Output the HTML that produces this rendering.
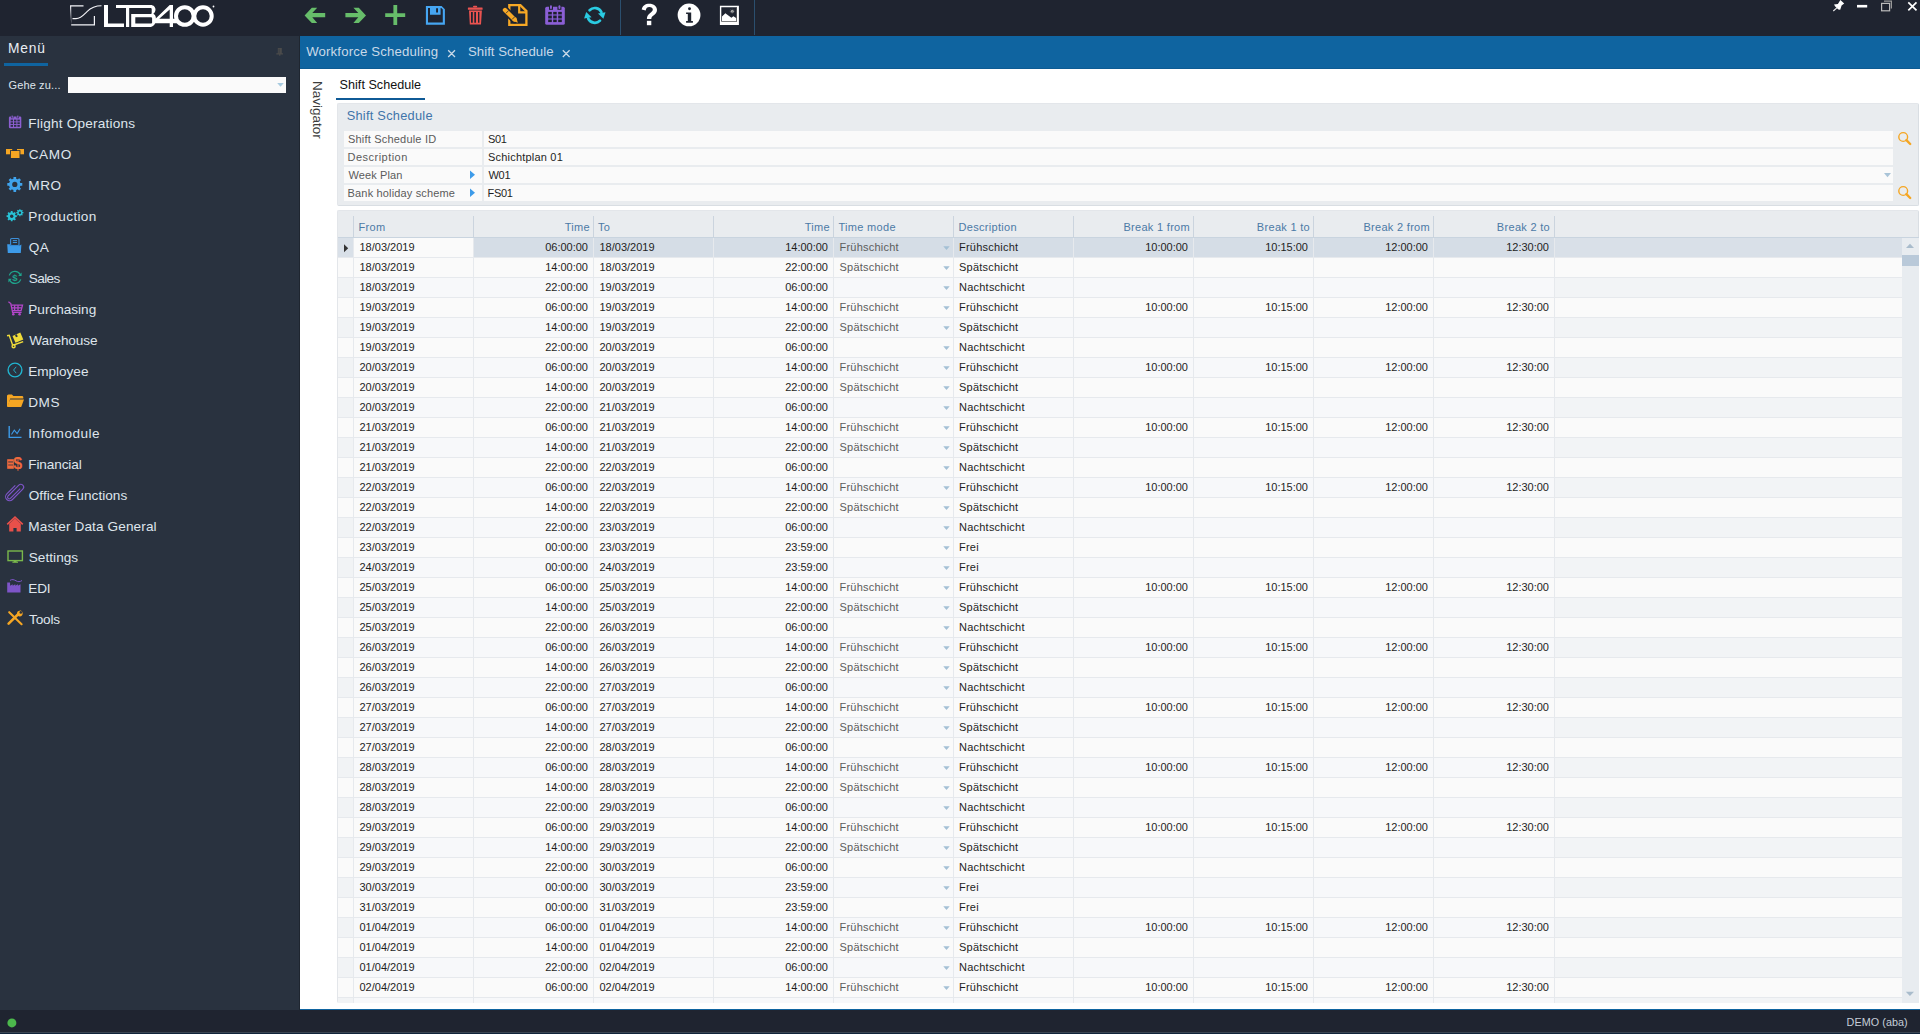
<!DOCTYPE html><html><head><meta charset="utf-8"><style>
*{box-sizing:border-box;margin:0;padding:0}
html,body{width:1920px;height:1034px;overflow:hidden;background:#1f2430;font-family:"Liberation Sans",sans-serif}
.abs{position:absolute}
#top{position:absolute;left:0;top:0;width:1920px;height:36px;background:#1f2430}
#side{position:absolute;left:0;top:36px;width:300px;height:974px;background:#29323f;border-right:1px solid #1f2630}
#status{position:absolute;left:0;top:1010px;width:1920px;height:24px;background:#1f2430}
#tabbar{position:absolute;left:300px;top:36px;width:1620px;height:33px;background:#0f64a0;border-bottom:1px solid #0d5b93}
#content{position:absolute;left:300px;top:69px;width:1620px;height:940px;background:#fff}
.t{position:absolute;white-space:pre;line-height:1}
.mi{position:absolute;left:29px;font-size:13.8px;color:#dfe5ec}
.panel{position:absolute;background:#e9ecef;border-radius:2px;border:1px solid #e3e6ea;border-right-color:#d9dee3;border-bottom-color:#d9dee3}
.lab{position:absolute;left:344px;width:138px;height:16px;background:#fafafa}
.val{position:absolute;left:484px;width:1409px;height:16px;background:#fafafa}
.lt{position:absolute;font-size:11.3px;color:#5a5a5a;white-space:pre;line-height:1}
.vt{position:absolute;font-size:11px;color:#1e1e1e;white-space:pre;line-height:1}
.hd{position:absolute;font-size:11px;color:#4c7aa6;white-space:pre;line-height:1}
.hsep{position:absolute;top:216px;width:1px;height:21px;background:#cbd4de}
.row{position:absolute;left:337px;width:1565px;height:20px}
.c{position:absolute;top:0;height:19px;font-size:11px;color:#1e1e1e;white-space:pre;line-height:19px}
.r{text-align:right}
</style></head><body><div id="top"></div><div id="side"></div><div id="status"></div><div id="tabbar"></div><div id="content"></div><div class="abs" style="left:300px;top:1009px;width:1620px;height:1px;background:#0f64a0;"></div><div class="abs" style="left:0px;top:1032px;width:1920px;height:1px;background:#3a4451;"></div><div class="abs" style="left:0px;top:1033px;width:1920px;height:1px;background:#10243a;"></div><div class="abs" style="left:620px;top:0px;width:1px;height:35px;background:#2b4f6e;"></div><div class="abs" style="left:754px;top:0px;width:1px;height:35px;background:#2b4f6e;"></div><svg class="abs" style="left:0;top:0" width="1920" height="36" viewBox="0 0 1920 36">
<g fill="#fff">
<!-- logo box -->
<path d="M70 5.2h13.5v1.2H71.2v19H95V16h-1.2v8.2H71.2z" fill="#f4f4f8"/>
<path d="M72.5 18.6h3.5c4.5 0 7.5-3.5 11-7 3.5-3.5 7-5.8 14.5-5.8" fill="none" stroke="#f4f4f8" stroke-width="1.1"/>
<!-- L -->
<path d="M104 5h4v18.6h16V27h-20z"/>
<!-- T + B -->
<path d="M116 5h34.5c3.4 0 5 2.3 5 4.6 0 1.8-.9 3.3-2.2 4.1 1.6.7 2.6 2.3 2.6 4.4v1.8c0 3.6-2.4 7.1-6.5 7.1H131.2V14h19.3c.7 0 1.2-.5 1.2-1.1v-3.7c0-.6-.5-1.1-1.2-1.1H129.2v19h-3.2V8.1h-10z"/>
<path d="M135.3 17.3h15.5c.8 0 1.3.5 1.3 1.2v3.9c0 .6-.5 1.2-1.3 1.2h-15.5z" fill="#1f2430"/>
<!-- 4 -->
<path d="M169.7 5h3.3v13.8h4.5v4.4h-4.5V27h-3.3v-3.8h-15v-3.6zM169.7 9.6l-10.5 9.2h10.5z" fill-rule="evenodd"/>
<!-- 0 0 -->
<circle cx="184.8" cy="16" r="8.8" fill="none" stroke="#fff" stroke-width="4"/>
<circle cx="203" cy="16" r="8.7" fill="none" stroke="#fff" stroke-width="4"/>
<circle cx="213.5" cy="6.5" r=".9"/>
</g>
<!-- left arrow -->
<path d="M304.6 15.5L311.8 7.8h5.4l-4.9 5.1h12.9v4.3h-12.9l4.9 5.7h-5.4z" fill="#67bd6a"/>
<path d="M304.6 15.5L311.8 7.8h5.4l-4.9 5.1h12.9v4.3h-12.9l4.9 5.7h-5.4z" fill="#67bd6a" transform="translate(670.6 0) scale(-1 1)"/>
<!-- plus -->
<path d="M393.4 5h3.8v8.3h8v3.8h-8V25h-3.8v-7.9h-8.2v-3.8h8.2z" fill="#67bd6a"/>
<!-- save -->
<path d="M425.9 6h15.7l3.3 3.3v15.5h-19zM428 8v14.5h14.8V9.6L441.3 8H440.6v6.8H430V8zM436.1 8.2v4.4h1.9V8.2z" fill="#46a6f2" fill-rule="evenodd"/>
<!-- trash -->
<g fill="#ea5350">
<rect x="473" y="5.8" width="4.2" height="1.6" rx=".8"/>
<rect x="467.9" y="7.6" width="14.7" height="2.1" rx=".5"/>
<path d="M469 10.5h12.9l-.9 14h-11.2zM471 12v10.7h1.8V12zM474.3 12v10.7h1.7V12zM478 12v10.7h1.4V12z" fill-rule="evenodd"/>
</g>
<!-- edit doc -->
<g>
<path d="M509.3 5.2h11.1l6 5.9v13.8h-17.1z" fill="none" stroke="#f7a825" stroke-width="2.3"/>
<path d="M519.2 5v7.4h7.5" fill="none" stroke="#f7a825" stroke-width="2.2"/>
<line x1="505" y1="10" x2="514.5" y2="19.5" stroke="#1f2430" stroke-width="7.5" stroke-linecap="round"/>
<line x1="505" y1="10" x2="514.5" y2="19.5" stroke="#f7a825" stroke-width="4.4" stroke-linecap="round"/>
<path d="M512.3 20.8l3.7-3.7 1.9 5.6z" fill="#f7a825"/>
<line x1="505.9" y1="13.3" x2="508.7" y2="10.5" stroke="#1f2430" stroke-width=".8"/>
<line x1="512.1" y1="19.4" x2="514.9" y2="16.6" stroke="#1f2430" stroke-width=".8"/>
</g>
<!-- calendar -->
<g>
<rect x="545.2" y="6.7" width="19.6" height="18.1" rx="1.6" fill="#8b5fd6"/>
<rect x="549" y="5" width="4" height="4.8" fill="#1f2430"/>
<rect x="557.4" y="5" width="4" height="4.8" fill="#1f2430"/>
<rect x="550" y="5.3" width="1.9" height="3.6" rx=".9" fill="#8b5fd6"/>
<rect x="558.5" y="5.3" width="1.9" height="3.6" rx=".9" fill="#8b5fd6"/>
<g fill="#1c1f2a">
<rect x="548.2" y="11.9" width="3.6" height="2.4"/><rect x="553.2" y="11.9" width="3.5" height="2.4"/><rect x="558.2" y="11.9" width="3.6" height="2.4"/>
<rect x="548.2" y="16" width="3.6" height="2.1"/><rect x="553.2" y="16" width="3.5" height="2.1"/><rect x="558.2" y="16" width="3.6" height="2.1"/>
<rect x="548.2" y="20" width="3.6" height="2.1"/><rect x="553.2" y="20" width="3.5" height="2.1"/><rect x="558.2" y="20" width="3.6" height="2.1"/>
</g>
<g fill="#55438a">
<rect x="548.2" y="14.3" width="3.6" height="1.7"/><rect x="553.2" y="14.3" width="3.5" height="1.7"/><rect x="558.2" y="14.3" width="3.6" height="1.7"/>
<rect x="548.2" y="18.1" width="3.6" height="1.9"/><rect x="553.2" y="18.1" width="3.5" height="1.9"/><rect x="558.2" y="18.1" width="3.6" height="1.9"/>
</g>
</g>
<!-- refresh -->
<g fill="#2acbe2">
<path d="M589.6 10.2A7.3 7.3 0 0 1 601.4 12.2" fill="none" stroke="#2acbe2" stroke-width="2.7" stroke-linecap="round"/>
<path d="M605.5 12.2L603.4 18.8L598 13.6z"/>
<g transform="rotate(180 594.8 15.4)">
<path d="M589.6 10.2A7.3 7.3 0 0 1 601.4 12.2" fill="none" stroke="#2acbe2" stroke-width="2.7" stroke-linecap="round"/>
<path d="M605.5 12.2L603.4 18.8L598 13.6z"/>
</g>
</g>
<!-- help -->
<path d="M641.7 9.6C642.3 5.6 645.4 3.7 649.3 3.7C653.8 3.7 657 6.3 657 9.9C657 12.6 655.2 14 653.5 15.4C652 16.6 651.3 17.3 651.3 18.9H646.9C646.9 16.2 647.8 14.9 649.9 13.2C651.7 11.8 652.8 11.1 652.8 9.6C652.8 8 651.5 7.1 649.3 7.1C647.3 7.1 646.1 8.2 645.7 10.5Z" fill="#fff"/>
<rect x="646.9" y="20.8" width="4.4" height="4.4" fill="#fff"/>
<!-- info -->
<circle cx="689.05" cy="14.95" r="11.4" fill="#fff"/>
<circle cx="689.5" cy="8.75" r="1.45" fill="#1f2430"/>
<path d="M686.1 12.4h5.1v8.6h1.7v1.8h-6.8V21h1.7v-6.9h-1.7z" fill="#1f2430"/>
<!-- image -->
<path d="M719.9 5.8h19v19.1h-19zM721.3 7.15v14.45h15.7V7.15z" fill="#fff" fill-rule="evenodd"/>
<path d="M722 16.6L725.4 13.3L727 14.5L731.4 17.8L733.4 16.3L736.5 18.3V21H722z" fill="#fff"/>
<rect x="721.3" y="21" width="15.7" height=".7" fill="#777"/>
<rect x="736.3" y="7.2" width=".7" height="14.4" fill="#666"/>
<circle cx="732.2" cy="11.2" r="1.3" fill="#fff"/>
<path d="M732.2 8.6v5.2M729.6 11.2h5.2M730.4 9.4l3.6 3.6M734 9.4l-3.6 3.6" stroke="#777" stroke-width=".5"/>
<!-- window controls -->
<path d="M1840.4 0L1844.2 3.6L1841.6 5.4L1840.2 9.8L1838.4 9.6L1836.8 7.9L1835.2 6.4L1834 4.5L1837.9 3.9L1839.6 1.2z" fill="#fff"/><path d="M1837.4 7.4L1833.3 11" stroke="#eee" stroke-width="1.1"/>
<rect x="1857" y="4.9" width="10.2" height="2.6" fill="#fff"/>
<path d="M1884 1.2h7.4v7.4" fill="none" stroke="#999" stroke-width="1.2"/>
<rect x="1881.6" y="3.4" width="8" height="7.4" fill="none" stroke="#bbb" stroke-width="1.2"/>
<path d="M1908.3 2.3l8.2 8M1916.5 2.3l-8.2 8" stroke="#fff" stroke-width="1.7"/>
</svg><div class="t" style="left:8.07px;top:42.32px;font-size:13.8px;color:#e9eef3;letter-spacing:0.762px;">Menü</div><div class="abs" style="left:4px;top:63px;width:44px;height:3px;background:#0f64a0;"></div><div class="t" style="left:8.45px;top:79.69px;font-size:11px;color:#dfe5eb;letter-spacing:0.144px;">Gehe zu...</div><div class="abs" style="left:68px;top:77px;width:218px;height:16px;background:#fafafa;"></div><div class="t" style="left:28.28px;top:117.49px;font-size:13.6px;color:#dfe5ec;letter-spacing:0.203px">Flight Operations</div><div class="t" style="left:28.71px;top:148.49px;font-size:13.6px;color:#dfe5ec;letter-spacing:0.600px">CAMO</div><div class="t" style="left:28.28px;top:179.49px;font-size:13.6px;color:#dfe5ec;letter-spacing:0.600px">MRO</div><div class="t" style="left:28.28px;top:210.49px;font-size:13.6px;color:#dfe5ec;letter-spacing:0.342px">Production</div><div class="t" style="left:28.76px;top:241.49px;font-size:13.6px;color:#dfe5ec;letter-spacing:0.314px">QA</div><div class="t" style="left:28.77px;top:272.49px;font-size:13.6px;color:#dfe5ec;letter-spacing:-0.600px">Sales</div><div class="t" style="left:28.28px;top:303.49px;font-size:13.6px;color:#dfe5ec;letter-spacing:-0.006px">Purchasing</div><div class="t" style="left:29.33px;top:334.49px;font-size:13.6px;color:#dfe5ec;letter-spacing:-0.098px">Warehouse</div><div class="t" style="left:28.28px;top:365.49px;font-size:13.6px;color:#dfe5ec;letter-spacing:-0.038px">Employee</div><div class="t" style="left:28.28px;top:396.49px;font-size:13.6px;color:#dfe5ec;letter-spacing:0.511px">DMS</div><div class="t" style="left:28.15px;top:427.49px;font-size:13.6px;color:#dfe5ec;letter-spacing:0.451px">Infomodule</div><div class="t" style="left:28.28px;top:458.49px;font-size:13.6px;color:#dfe5ec;letter-spacing:-0.125px">Financial</div><div class="t" style="left:28.76px;top:489.49px;font-size:13.6px;color:#dfe5ec;letter-spacing:0.034px">Office Functions</div><div class="t" style="left:28.28px;top:520.49px;font-size:13.6px;color:#dfe5ec;letter-spacing:0.122px">Master Data General</div><div class="t" style="left:28.77px;top:551.49px;font-size:13.6px;color:#dfe5ec;letter-spacing:0.040px">Settings</div><div class="t" style="left:28.28px;top:582.49px;font-size:13.6px;color:#dfe5ec;letter-spacing:-0.152px">EDI</div><div class="t" style="left:29.1px;top:613.49px;font-size:13.6px;color:#dfe5ec;letter-spacing:-0.188px">Tools</div><svg class="abs" style="left:0;top:0" width="300" height="640" viewBox="0 0 300 640">
<!-- menu pin -->
<path d="M277.8 48.1h4v5.2h1.2v1.1h-2.6v1.3h-1.2v-1.3h-2.9v-1.1h1.5z" fill="#4b4b4b"/>
<rect x="278.6" y="48.8" width="1" height="4.5" fill="#29323f" opacity=".5"/>
<path d="M277.2 83h6.6l-3.3 3.8z" fill="#a8cbe0"/>
<!-- flight ops calendar -->
<rect x="8.9" y="116.5" width="12.4" height="11.8" rx="1.2" fill="#8c5fd0"/>
<rect x="11" y="115.6" width="2.4" height="2.6" fill="#29323f"/><rect x="16.6" y="115.6" width="2.4" height="2.6" fill="#29323f"/>
<rect x="11.6" y="115.6" width="1.2" height="2.2" fill="#8c5fd0"/><rect x="17.2" y="115.6" width="1.2" height="2.2" fill="#8c5fd0"/>
<g fill="#2a2f44"><rect x="10.6" y="119.6" width="2.4" height="1.8"/><rect x="14" y="119.6" width="2.4" height="1.8"/><rect x="17.4" y="119.6" width="2.4" height="1.8"/>
<rect x="10.6" y="122.3" width="2.4" height="1.8"/><rect x="14" y="122.3" width="2.4" height="1.8"/><rect x="17.4" y="122.3" width="2.4" height="1.8"/>
<rect x="10.6" y="125" width="2.4" height="1.8"/><rect x="14" y="125" width="2.4" height="1.8"/><rect x="17.4" y="125" width="2.4" height="1.8"/></g>
<!-- CAMO -->
<rect x="6" y="149" width="6.2" height="5.3" fill="#f5a623"/>
<rect x="17" y="149" width="7" height="5.3" fill="#f5a623"/>
<rect x="10" y="150.2" width="10.4" height="8.6" fill="#29323f"/>
<rect x="10.9" y="151" width="8.6" height="7" fill="#f5a623"/>
<!-- MRO gear -->
<polygon points="20.21,182.96 22.29,183.09 22.29,185.71 20.21,185.84 19.64,187.21 21.02,188.77 19.17,190.62 17.61,189.24 16.24,189.81 16.11,191.89 13.49,191.89 13.36,189.81 11.99,189.24 10.43,190.62 8.58,188.77 9.96,187.21 9.39,185.84 7.31,185.71 7.31,183.09 9.39,182.96 9.96,181.59 8.58,180.03 10.43,178.18 11.99,179.56 13.36,178.99 13.49,176.91 16.11,176.91 16.24,178.99 17.61,179.56 19.17,178.18 21.02,180.03 19.64,181.59" fill="#3fa3ec"/><circle cx="14.8" cy="184.4" r="5.6" fill="#3fa3ec"/><circle cx="14.8" cy="184.4" r="2.6" fill="#29323f"/>
<!-- Production gears -->
<polygon points="15.28,215.25 16.82,215.31 16.82,217.09 15.28,217.15 14.90,218.06 15.95,219.19 14.69,220.45 13.56,219.40 12.65,219.78 12.59,221.32 10.81,221.32 10.75,219.78 9.84,219.40 8.71,220.45 7.45,219.19 8.50,218.06 8.12,217.15 6.58,217.09 6.58,215.31 8.12,215.25 8.50,214.34 7.45,213.21 8.71,211.95 9.84,213.00 10.75,212.62 10.81,211.08 12.59,211.08 12.65,212.62 13.56,213.00 14.69,211.95 15.95,213.21 14.90,214.34" fill="#28c2d6"/><circle cx="11.7" cy="216.2" r="3.7" fill="#28c2d6"/><circle cx="11.7" cy="216.2" r="1.7" fill="#29323f"/>
<polygon points="22.32,212.06 23.45,212.08 23.45,213.32 22.32,213.34 22.06,213.96 22.85,214.77 21.97,215.65 21.16,214.86 20.54,215.12 20.52,216.25 19.28,216.25 19.26,215.12 18.64,214.86 17.83,215.65 16.95,214.77 17.74,213.96 17.48,213.34 16.35,213.32 16.35,212.08 17.48,212.06 17.74,211.44 16.95,210.63 17.83,209.75 18.64,210.54 19.26,210.28 19.28,209.15 20.52,209.15 20.54,210.28 21.16,210.54 21.97,209.75 22.85,210.63 22.06,211.44" fill="#28c2d6"/><circle cx="19.9" cy="212.7" r="2.5" fill="#28c2d6"/><circle cx="19.9" cy="212.7" r="1.2" fill="#29323f"/>
<!-- QA folder -->
<rect x="10.6" y="238.5" width="8.4" height="7" rx="1" fill="none" stroke="#3d8fd8" stroke-width="1.1"/>
<rect x="12.8" y="240.2" width="4.2" height=".9" fill="#3d9be9"/><rect x="12.8" y="242" width="4.2" height=".9" fill="#3d9be9"/>
<path d="M7.2 244.2h2.6l.6 1.4h9.4l1.6-1.2-.6 8.6H7.8z" fill="#3d9be9"/>
<path d="M9.6 245.6h10.6" stroke="#2f7fc4" stroke-width=".6"/>
<!-- Sales -->
<g fill="none" stroke="#1fa48c" stroke-width="1.3">
<path d="M9.3 275.4A6 6 0 0 1 20.3 274.6"/><path d="M20.7 279.4A6 6 0 0 1 9.7 280.2"/>
</g>
<path d="M21.6 272.4v3.6h-3.4zM8.4 282.4v-3.6h3.4z" fill="#1fa48c"/>
<text x="12.2" y="281.4" font-family="Liberation Sans" font-size="9.5" font-weight="bold" fill="#1fa48c">$</text>
<!-- Purchasing cart -->
<g fill="none" stroke="#b346c9" stroke-width="1.3">
<path d="M8.4 301.8l2.4 1.8 1.8 8.7h9"/>
<path d="M11.2 305.2h11.3l-1.4 5.4H12.3"/>
<path d="M14.6 305.2v5.4M18 305.2v5.4M11.8 307.9h10"/>
</g>
<circle cx="13.3" cy="314.2" r="1.3" fill="#b346c9"/><circle cx="19.6" cy="314.2" r="1.3" fill="#b346c9"/>
<!-- Warehouse dolly -->
<g fill="none" stroke="#f0dc3a" stroke-width="1.4">
<path d="M7 335.7l2.2-.4 3.4 9.8"/><path d="M13.6 345l9.6-3.4"/>
<circle cx="13.6" cy="346.3" r="1.5"/>
</g>
<path d="M12.5 336l7.8-3.4 3 6.8-7.8 3.4z" fill="#f0dc3a"/>
<path d="M15 335l1.8-.8 1 2.2-1.8.8z" fill="#29323f"/>
<!-- Employee clock -->
<circle cx="15" cy="370" r="6.9" fill="none" stroke="#22b5d0" stroke-width="1.4"/>
<path d="M16.2 366.8l-2.6 3.2 2.6 3.2" fill="none" stroke="#22b5d0" stroke-width=".9"/>
<!-- DMS folder -->
<path d="M7 396.2c0-1 .6-1.8 1.6-1.8h3.3l1.5 1.5h8.5c.9 0 1.4.6 1.4 1.4v1.2H10.2l-2.2 8H7z" fill="#f5a623"/>
<path d="M10 399.5h14l-2.8 7.4H7.2z" fill="#f5a623"/>
<!-- Infomodule chart -->
<path d="M9.2 426v11.4h12.3" fill="none" stroke="#3d9be9" stroke-width="1.4"/>
<path d="M11.5 434.5l2.8-4.4 2.8 3.4 3-4.8" fill="none" stroke="#3d9be9" stroke-width="1.1"/>
<!-- Financial -->
<text x="13.2" y="469" font-family="Liberation Sans" font-size="16" font-weight="bold" fill="#ef6a3e">$</text>
<rect x="7.2" y="459.2" width="6.6" height="9.6" fill="#ef6a3e"/>
<rect x="8.2" y="461.5" width="4.8" height=".9" fill="#29323f"/><rect x="8.2" y="464.6" width="4.8" height=".8" fill="#29323f"/>
<!-- Office paperclip -->
<path d="M20.2 488.6l-9.8 9.8a1.7 1.7 0 0 1-2.4-2.4l10.8-10.8a2.8 2.8 0 0 1 4 4l-10.3 10.3a4 4 0 0 1-5.7-5.7l8.5-8.5" fill="none" stroke="#7e55c8" stroke-width="1.1"/>
<!-- House -->
<path d="M7.2 524.4l7.8-7.2 7.8 7.2" fill="none" stroke="#e8504a" stroke-width="1.6"/>
<path d="M9.2 523.8l5.8-5.2 5.8 5.2v7.8h-4.2v-3.6h-3.2v3.6H9.2z" fill="#e8504a"/>
<!-- Settings monitor -->
<rect x="8" y="551" width="14.4" height="9.6" fill="none" stroke="#7ab84c" stroke-width="1.4"/>
<path d="M12.4 561.6h5.6v1.2h-5.6z" fill="#7ab84c"/><rect x="13.8" y="560.5" width="2.8" height="1.5" fill="#7ab84c"/>
<!-- EDI factory -->
<path d="M7.2 592.4V582.6h2.9v3.2l2.6-1.6v1.6l2.6-1.6v1.6l2.6-1.6v1.6l2.6-1.6v8.2z" fill="#7e55c8"/>
<path d="M10 580.4c2-1.4 4-.8 6 .4s4 1.2 6-.3" fill="none" stroke="#7e55c8" stroke-width="1"/>
<!-- Tools -->
<path d="M9.2 612.2l12.4 12" stroke="#f5a623" stroke-width="2.1" stroke-linecap="round"/>
<path d="M20.6 611.8l-12 11.8" stroke="#f5a623" stroke-width="2.6" stroke-linecap="round"/>
<circle cx="19.8" cy="613.6" r="2.8" fill="#f5a623"/>
<circle cx="20.8" cy="612.4" r="1.3" fill="#29323f"/>
</svg><div class="t" style="left:467.99px;top:44.83px;font-size:13.2px;color:#c9d9e8;letter-spacing:0.035px;">Shift Schedule</div><div class="t" style="left:306.13px;top:44.83px;font-size:13.2px;color:#c9d9e8;letter-spacing:0.170px;">Workforce Scheduling</div><svg class="abs" style="left:0;top:0" width="1920" height="70" viewBox="0 0 1920 70"><path d="M448.2 50.2l6.8 6.8M455 50.2l-6.8 6.8M562.8 50.2l6.8 6.8M569.6 50.2l-6.8 6.8" stroke="#c9d9e8" stroke-width="1.3"/></svg><div class="t" style="left:339.62px;top:79.33px;font-size:12.6px;color:#111;letter-spacing:0.021px;">Shift Schedule</div><div class="abs" style="left:336px;top:98px;width:89px;height:2px;background:#0f5a96;"></div><div class="t" style="left:323.5px;top:80.6px;font-size:13.5px;color:#3c3c3c;transform-origin:0 0;transform:rotate(90deg)">Navigator</div><div class="panel" style="left:337px;top:103px;width:1582px;height:103px"></div><div class="t" style="left:346.66px;top:110.16px;font-size:12.8px;color:#3f74aa;letter-spacing:0.258px;">Shift Schedule</div><div class="abs" style="left:344px;top:131px;width:138px;height:16px;background:#fafafa;"></div><div class="abs" style="left:484px;top:131px;width:1409px;height:16px;background:#fafafa;"></div><div class="t" style="left:347.99px;top:133.69px;font-size:11px;color:#5a5a5a;letter-spacing:0.197px;">Shift Schedule ID</div><div class="t" style="left:487.99px;top:133.69px;font-size:11px;color:#1e1e1e;letter-spacing:-0.350px;">S01</div><div class="abs" style="left:344px;top:149px;width:138px;height:16px;background:#fafafa;"></div><div class="abs" style="left:484px;top:149px;width:1409px;height:16px;background:#fafafa;"></div><div class="t" style="left:347.6px;top:151.69px;font-size:11px;color:#5a5a5a;letter-spacing:0.470px;">Description</div><div class="t" style="left:487.99px;top:151.69px;font-size:11px;color:#1e1e1e;letter-spacing:0.203px;">Schichtplan 01</div><div class="abs" style="left:344px;top:167px;width:138px;height:16px;background:#fafafa;"></div><div class="abs" style="left:484px;top:167px;width:1409px;height:16px;background:#fafafa;"></div><div class="t" style="left:348.44px;top:169.69px;font-size:11px;color:#5a5a5a;letter-spacing:0.110px;">Week Plan</div><div class="t" style="left:488.44px;top:169.69px;font-size:11px;color:#1e1e1e;letter-spacing:-0.261px;">W01</div><div class="abs" style="left:344px;top:185px;width:138px;height:16px;background:#fafafa;"></div><div class="abs" style="left:484px;top:185px;width:1409px;height:16px;background:#fafafa;"></div><div class="t" style="left:347.6px;top:187.69px;font-size:11px;color:#5a5a5a;letter-spacing:0.157px;">Bank holiday scheme</div><div class="t" style="left:487.6px;top:187.69px;font-size:11px;color:#1e1e1e;letter-spacing:-0.350px;">FS01</div><svg class="abs" style="left:0;top:0" width="1920" height="210" viewBox="0 0 1920 210">
<path d="M470 170.4l5 4.35-5 4.35zM470 188.4l5 4.35-5 4.35z" fill="#3d9be9"/>
<path d="M1884 172.9h7l-3.5 4.4z" fill="#a9c4d8"/>
<g fill="none" stroke="#f5a623"><circle cx="1903.2" cy="137" r="4.4" stroke-width="1.4"/><path d="M1906.4 140.2l3.8 3.8" stroke-width="2.4" stroke-linecap="round"/>
<circle cx="1903.2" cy="191" r="4.4" stroke-width="1.4"/><path d="M1906.4 194.2l3.8 3.8" stroke-width="2.4" stroke-linecap="round"/></g>
</svg><div class="t" style="left:1846.61px;top:1016.86px;font-size:10.8px;color:#c5ced8;letter-spacing:0.050px;">DEMO (aba)</div><svg class="abs" style="left:0;top:1010px" width="40" height="24"><circle cx="11.9" cy="12.9" r="4.5" fill="#4cb84c"/></svg><div class="panel" style="left:337px;top:210px;width:1582px;height:793px;background:#e9ecef"></div><div class="row" style="top:238px;height:20px;overflow:hidden;left:338px;width:1564px;background:#e6e9ed"><div class="abs" style="left:0;top:0;width:15px;height:19px;background:#d9e0e8"></div><div class="abs" style="left:16px;top:0;width:119px;height:19px;background:#fafafa"></div><div class="abs" style="left:136px;top:0;width:119px;height:19px;background:#d5dde6"></div><div class="abs" style="left:256px;top:0;width:119px;height:19px;background:#d5dde6"></div><div class="abs" style="left:376px;top:0;width:119px;height:19px;background:#d5dde6"></div><div class="abs" style="left:496px;top:0;width:119px;height:19px;background:#d5dde6"></div><div class="abs" style="left:616px;top:0;width:119px;height:19px;background:#d5dde6"></div><div class="abs" style="left:736px;top:0;width:119px;height:19px;background:#d5dde6"></div><div class="abs" style="left:856px;top:0;width:119px;height:19px;background:#d5dde6"></div><div class="abs" style="left:976px;top:0;width:119px;height:19px;background:#d5dde6"></div><div class="abs" style="left:1096px;top:0;width:120px;height:19px;background:#d5dde6"></div><div class="abs" style="left:1217px;top:0;width:347px;height:19px;background:#d9e0e8"></div></div><div class="row" style="top:258px;height:20px;overflow:hidden;left:338px;width:1564px;background:#e6e9ed"><div class="abs" style="left:0;top:0;width:15px;height:19px;background:#fafafa"></div><div class="abs" style="left:16px;top:0;width:119px;height:19px;background:#fafafa"></div><div class="abs" style="left:136px;top:0;width:119px;height:19px;background:#fafafa"></div><div class="abs" style="left:256px;top:0;width:119px;height:19px;background:#fafafa"></div><div class="abs" style="left:376px;top:0;width:119px;height:19px;background:#fafafa"></div><div class="abs" style="left:496px;top:0;width:119px;height:19px;background:#fafafa"></div><div class="abs" style="left:616px;top:0;width:119px;height:19px;background:#fafafa"></div><div class="abs" style="left:736px;top:0;width:119px;height:19px;background:#fafafa"></div><div class="abs" style="left:856px;top:0;width:119px;height:19px;background:#fafafa"></div><div class="abs" style="left:976px;top:0;width:119px;height:19px;background:#fafafa"></div><div class="abs" style="left:1096px;top:0;width:120px;height:19px;background:#fafafa"></div><div class="abs" style="left:1217px;top:0;width:347px;height:19px;background:#fafafa"></div></div><div class="row" style="top:278px;height:20px;overflow:hidden;left:338px;width:1564px;background:#e6e9ed"><div class="abs" style="left:0;top:0;width:15px;height:19px;background:#f1f3f5"></div><div class="abs" style="left:16px;top:0;width:119px;height:19px;background:#f7f8fa"></div><div class="abs" style="left:136px;top:0;width:119px;height:19px;background:#f7f8fa"></div><div class="abs" style="left:256px;top:0;width:119px;height:19px;background:#f7f8fa"></div><div class="abs" style="left:376px;top:0;width:119px;height:19px;background:#f7f8fa"></div><div class="abs" style="left:496px;top:0;width:119px;height:19px;background:#f7f8fa"></div><div class="abs" style="left:616px;top:0;width:119px;height:19px;background:#f7f8fa"></div><div class="abs" style="left:736px;top:0;width:119px;height:19px;background:#f7f8fa"></div><div class="abs" style="left:856px;top:0;width:119px;height:19px;background:#f7f8fa"></div><div class="abs" style="left:976px;top:0;width:119px;height:19px;background:#f7f8fa"></div><div class="abs" style="left:1096px;top:0;width:120px;height:19px;background:#f7f8fa"></div><div class="abs" style="left:1217px;top:0;width:347px;height:19px;background:#f2f4f6"></div></div><div class="row" style="top:298px;height:20px;overflow:hidden;left:338px;width:1564px;background:#e6e9ed"><div class="abs" style="left:0;top:0;width:15px;height:19px;background:#fafafa"></div><div class="abs" style="left:16px;top:0;width:119px;height:19px;background:#fafafa"></div><div class="abs" style="left:136px;top:0;width:119px;height:19px;background:#fafafa"></div><div class="abs" style="left:256px;top:0;width:119px;height:19px;background:#fafafa"></div><div class="abs" style="left:376px;top:0;width:119px;height:19px;background:#fafafa"></div><div class="abs" style="left:496px;top:0;width:119px;height:19px;background:#fafafa"></div><div class="abs" style="left:616px;top:0;width:119px;height:19px;background:#fafafa"></div><div class="abs" style="left:736px;top:0;width:119px;height:19px;background:#fafafa"></div><div class="abs" style="left:856px;top:0;width:119px;height:19px;background:#fafafa"></div><div class="abs" style="left:976px;top:0;width:119px;height:19px;background:#fafafa"></div><div class="abs" style="left:1096px;top:0;width:120px;height:19px;background:#fafafa"></div><div class="abs" style="left:1217px;top:0;width:347px;height:19px;background:#fafafa"></div></div><div class="row" style="top:318px;height:20px;overflow:hidden;left:338px;width:1564px;background:#e6e9ed"><div class="abs" style="left:0;top:0;width:15px;height:19px;background:#f1f3f5"></div><div class="abs" style="left:16px;top:0;width:119px;height:19px;background:#f7f8fa"></div><div class="abs" style="left:136px;top:0;width:119px;height:19px;background:#f7f8fa"></div><div class="abs" style="left:256px;top:0;width:119px;height:19px;background:#f7f8fa"></div><div class="abs" style="left:376px;top:0;width:119px;height:19px;background:#f7f8fa"></div><div class="abs" style="left:496px;top:0;width:119px;height:19px;background:#f7f8fa"></div><div class="abs" style="left:616px;top:0;width:119px;height:19px;background:#f7f8fa"></div><div class="abs" style="left:736px;top:0;width:119px;height:19px;background:#f7f8fa"></div><div class="abs" style="left:856px;top:0;width:119px;height:19px;background:#f7f8fa"></div><div class="abs" style="left:976px;top:0;width:119px;height:19px;background:#f7f8fa"></div><div class="abs" style="left:1096px;top:0;width:120px;height:19px;background:#f7f8fa"></div><div class="abs" style="left:1217px;top:0;width:347px;height:19px;background:#f2f4f6"></div></div><div class="row" style="top:338px;height:20px;overflow:hidden;left:338px;width:1564px;background:#e6e9ed"><div class="abs" style="left:0;top:0;width:15px;height:19px;background:#fafafa"></div><div class="abs" style="left:16px;top:0;width:119px;height:19px;background:#fafafa"></div><div class="abs" style="left:136px;top:0;width:119px;height:19px;background:#fafafa"></div><div class="abs" style="left:256px;top:0;width:119px;height:19px;background:#fafafa"></div><div class="abs" style="left:376px;top:0;width:119px;height:19px;background:#fafafa"></div><div class="abs" style="left:496px;top:0;width:119px;height:19px;background:#fafafa"></div><div class="abs" style="left:616px;top:0;width:119px;height:19px;background:#fafafa"></div><div class="abs" style="left:736px;top:0;width:119px;height:19px;background:#fafafa"></div><div class="abs" style="left:856px;top:0;width:119px;height:19px;background:#fafafa"></div><div class="abs" style="left:976px;top:0;width:119px;height:19px;background:#fafafa"></div><div class="abs" style="left:1096px;top:0;width:120px;height:19px;background:#fafafa"></div><div class="abs" style="left:1217px;top:0;width:347px;height:19px;background:#fafafa"></div></div><div class="row" style="top:358px;height:20px;overflow:hidden;left:338px;width:1564px;background:#e6e9ed"><div class="abs" style="left:0;top:0;width:15px;height:19px;background:#f1f3f5"></div><div class="abs" style="left:16px;top:0;width:119px;height:19px;background:#f7f8fa"></div><div class="abs" style="left:136px;top:0;width:119px;height:19px;background:#f7f8fa"></div><div class="abs" style="left:256px;top:0;width:119px;height:19px;background:#f7f8fa"></div><div class="abs" style="left:376px;top:0;width:119px;height:19px;background:#f7f8fa"></div><div class="abs" style="left:496px;top:0;width:119px;height:19px;background:#f7f8fa"></div><div class="abs" style="left:616px;top:0;width:119px;height:19px;background:#f7f8fa"></div><div class="abs" style="left:736px;top:0;width:119px;height:19px;background:#f7f8fa"></div><div class="abs" style="left:856px;top:0;width:119px;height:19px;background:#f7f8fa"></div><div class="abs" style="left:976px;top:0;width:119px;height:19px;background:#f7f8fa"></div><div class="abs" style="left:1096px;top:0;width:120px;height:19px;background:#f7f8fa"></div><div class="abs" style="left:1217px;top:0;width:347px;height:19px;background:#f2f4f6"></div></div><div class="row" style="top:378px;height:20px;overflow:hidden;left:338px;width:1564px;background:#e6e9ed"><div class="abs" style="left:0;top:0;width:15px;height:19px;background:#fafafa"></div><div class="abs" style="left:16px;top:0;width:119px;height:19px;background:#fafafa"></div><div class="abs" style="left:136px;top:0;width:119px;height:19px;background:#fafafa"></div><div class="abs" style="left:256px;top:0;width:119px;height:19px;background:#fafafa"></div><div class="abs" style="left:376px;top:0;width:119px;height:19px;background:#fafafa"></div><div class="abs" style="left:496px;top:0;width:119px;height:19px;background:#fafafa"></div><div class="abs" style="left:616px;top:0;width:119px;height:19px;background:#fafafa"></div><div class="abs" style="left:736px;top:0;width:119px;height:19px;background:#fafafa"></div><div class="abs" style="left:856px;top:0;width:119px;height:19px;background:#fafafa"></div><div class="abs" style="left:976px;top:0;width:119px;height:19px;background:#fafafa"></div><div class="abs" style="left:1096px;top:0;width:120px;height:19px;background:#fafafa"></div><div class="abs" style="left:1217px;top:0;width:347px;height:19px;background:#fafafa"></div></div><div class="row" style="top:398px;height:20px;overflow:hidden;left:338px;width:1564px;background:#e6e9ed"><div class="abs" style="left:0;top:0;width:15px;height:19px;background:#f1f3f5"></div><div class="abs" style="left:16px;top:0;width:119px;height:19px;background:#f7f8fa"></div><div class="abs" style="left:136px;top:0;width:119px;height:19px;background:#f7f8fa"></div><div class="abs" style="left:256px;top:0;width:119px;height:19px;background:#f7f8fa"></div><div class="abs" style="left:376px;top:0;width:119px;height:19px;background:#f7f8fa"></div><div class="abs" style="left:496px;top:0;width:119px;height:19px;background:#f7f8fa"></div><div class="abs" style="left:616px;top:0;width:119px;height:19px;background:#f7f8fa"></div><div class="abs" style="left:736px;top:0;width:119px;height:19px;background:#f7f8fa"></div><div class="abs" style="left:856px;top:0;width:119px;height:19px;background:#f7f8fa"></div><div class="abs" style="left:976px;top:0;width:119px;height:19px;background:#f7f8fa"></div><div class="abs" style="left:1096px;top:0;width:120px;height:19px;background:#f7f8fa"></div><div class="abs" style="left:1217px;top:0;width:347px;height:19px;background:#f2f4f6"></div></div><div class="row" style="top:418px;height:20px;overflow:hidden;left:338px;width:1564px;background:#e6e9ed"><div class="abs" style="left:0;top:0;width:15px;height:19px;background:#fafafa"></div><div class="abs" style="left:16px;top:0;width:119px;height:19px;background:#fafafa"></div><div class="abs" style="left:136px;top:0;width:119px;height:19px;background:#fafafa"></div><div class="abs" style="left:256px;top:0;width:119px;height:19px;background:#fafafa"></div><div class="abs" style="left:376px;top:0;width:119px;height:19px;background:#fafafa"></div><div class="abs" style="left:496px;top:0;width:119px;height:19px;background:#fafafa"></div><div class="abs" style="left:616px;top:0;width:119px;height:19px;background:#fafafa"></div><div class="abs" style="left:736px;top:0;width:119px;height:19px;background:#fafafa"></div><div class="abs" style="left:856px;top:0;width:119px;height:19px;background:#fafafa"></div><div class="abs" style="left:976px;top:0;width:119px;height:19px;background:#fafafa"></div><div class="abs" style="left:1096px;top:0;width:120px;height:19px;background:#fafafa"></div><div class="abs" style="left:1217px;top:0;width:347px;height:19px;background:#fafafa"></div></div><div class="row" style="top:438px;height:20px;overflow:hidden;left:338px;width:1564px;background:#e6e9ed"><div class="abs" style="left:0;top:0;width:15px;height:19px;background:#f1f3f5"></div><div class="abs" style="left:16px;top:0;width:119px;height:19px;background:#f7f8fa"></div><div class="abs" style="left:136px;top:0;width:119px;height:19px;background:#f7f8fa"></div><div class="abs" style="left:256px;top:0;width:119px;height:19px;background:#f7f8fa"></div><div class="abs" style="left:376px;top:0;width:119px;height:19px;background:#f7f8fa"></div><div class="abs" style="left:496px;top:0;width:119px;height:19px;background:#f7f8fa"></div><div class="abs" style="left:616px;top:0;width:119px;height:19px;background:#f7f8fa"></div><div class="abs" style="left:736px;top:0;width:119px;height:19px;background:#f7f8fa"></div><div class="abs" style="left:856px;top:0;width:119px;height:19px;background:#f7f8fa"></div><div class="abs" style="left:976px;top:0;width:119px;height:19px;background:#f7f8fa"></div><div class="abs" style="left:1096px;top:0;width:120px;height:19px;background:#f7f8fa"></div><div class="abs" style="left:1217px;top:0;width:347px;height:19px;background:#f2f4f6"></div></div><div class="row" style="top:458px;height:20px;overflow:hidden;left:338px;width:1564px;background:#e6e9ed"><div class="abs" style="left:0;top:0;width:15px;height:19px;background:#fafafa"></div><div class="abs" style="left:16px;top:0;width:119px;height:19px;background:#fafafa"></div><div class="abs" style="left:136px;top:0;width:119px;height:19px;background:#fafafa"></div><div class="abs" style="left:256px;top:0;width:119px;height:19px;background:#fafafa"></div><div class="abs" style="left:376px;top:0;width:119px;height:19px;background:#fafafa"></div><div class="abs" style="left:496px;top:0;width:119px;height:19px;background:#fafafa"></div><div class="abs" style="left:616px;top:0;width:119px;height:19px;background:#fafafa"></div><div class="abs" style="left:736px;top:0;width:119px;height:19px;background:#fafafa"></div><div class="abs" style="left:856px;top:0;width:119px;height:19px;background:#fafafa"></div><div class="abs" style="left:976px;top:0;width:119px;height:19px;background:#fafafa"></div><div class="abs" style="left:1096px;top:0;width:120px;height:19px;background:#fafafa"></div><div class="abs" style="left:1217px;top:0;width:347px;height:19px;background:#fafafa"></div></div><div class="row" style="top:478px;height:20px;overflow:hidden;left:338px;width:1564px;background:#e6e9ed"><div class="abs" style="left:0;top:0;width:15px;height:19px;background:#f1f3f5"></div><div class="abs" style="left:16px;top:0;width:119px;height:19px;background:#f7f8fa"></div><div class="abs" style="left:136px;top:0;width:119px;height:19px;background:#f7f8fa"></div><div class="abs" style="left:256px;top:0;width:119px;height:19px;background:#f7f8fa"></div><div class="abs" style="left:376px;top:0;width:119px;height:19px;background:#f7f8fa"></div><div class="abs" style="left:496px;top:0;width:119px;height:19px;background:#f7f8fa"></div><div class="abs" style="left:616px;top:0;width:119px;height:19px;background:#f7f8fa"></div><div class="abs" style="left:736px;top:0;width:119px;height:19px;background:#f7f8fa"></div><div class="abs" style="left:856px;top:0;width:119px;height:19px;background:#f7f8fa"></div><div class="abs" style="left:976px;top:0;width:119px;height:19px;background:#f7f8fa"></div><div class="abs" style="left:1096px;top:0;width:120px;height:19px;background:#f7f8fa"></div><div class="abs" style="left:1217px;top:0;width:347px;height:19px;background:#f2f4f6"></div></div><div class="row" style="top:498px;height:20px;overflow:hidden;left:338px;width:1564px;background:#e6e9ed"><div class="abs" style="left:0;top:0;width:15px;height:19px;background:#fafafa"></div><div class="abs" style="left:16px;top:0;width:119px;height:19px;background:#fafafa"></div><div class="abs" style="left:136px;top:0;width:119px;height:19px;background:#fafafa"></div><div class="abs" style="left:256px;top:0;width:119px;height:19px;background:#fafafa"></div><div class="abs" style="left:376px;top:0;width:119px;height:19px;background:#fafafa"></div><div class="abs" style="left:496px;top:0;width:119px;height:19px;background:#fafafa"></div><div class="abs" style="left:616px;top:0;width:119px;height:19px;background:#fafafa"></div><div class="abs" style="left:736px;top:0;width:119px;height:19px;background:#fafafa"></div><div class="abs" style="left:856px;top:0;width:119px;height:19px;background:#fafafa"></div><div class="abs" style="left:976px;top:0;width:119px;height:19px;background:#fafafa"></div><div class="abs" style="left:1096px;top:0;width:120px;height:19px;background:#fafafa"></div><div class="abs" style="left:1217px;top:0;width:347px;height:19px;background:#fafafa"></div></div><div class="row" style="top:518px;height:20px;overflow:hidden;left:338px;width:1564px;background:#e6e9ed"><div class="abs" style="left:0;top:0;width:15px;height:19px;background:#f1f3f5"></div><div class="abs" style="left:16px;top:0;width:119px;height:19px;background:#f7f8fa"></div><div class="abs" style="left:136px;top:0;width:119px;height:19px;background:#f7f8fa"></div><div class="abs" style="left:256px;top:0;width:119px;height:19px;background:#f7f8fa"></div><div class="abs" style="left:376px;top:0;width:119px;height:19px;background:#f7f8fa"></div><div class="abs" style="left:496px;top:0;width:119px;height:19px;background:#f7f8fa"></div><div class="abs" style="left:616px;top:0;width:119px;height:19px;background:#f7f8fa"></div><div class="abs" style="left:736px;top:0;width:119px;height:19px;background:#f7f8fa"></div><div class="abs" style="left:856px;top:0;width:119px;height:19px;background:#f7f8fa"></div><div class="abs" style="left:976px;top:0;width:119px;height:19px;background:#f7f8fa"></div><div class="abs" style="left:1096px;top:0;width:120px;height:19px;background:#f7f8fa"></div><div class="abs" style="left:1217px;top:0;width:347px;height:19px;background:#f2f4f6"></div></div><div class="row" style="top:538px;height:20px;overflow:hidden;left:338px;width:1564px;background:#e6e9ed"><div class="abs" style="left:0;top:0;width:15px;height:19px;background:#fafafa"></div><div class="abs" style="left:16px;top:0;width:119px;height:19px;background:#fafafa"></div><div class="abs" style="left:136px;top:0;width:119px;height:19px;background:#fafafa"></div><div class="abs" style="left:256px;top:0;width:119px;height:19px;background:#fafafa"></div><div class="abs" style="left:376px;top:0;width:119px;height:19px;background:#fafafa"></div><div class="abs" style="left:496px;top:0;width:119px;height:19px;background:#fafafa"></div><div class="abs" style="left:616px;top:0;width:119px;height:19px;background:#fafafa"></div><div class="abs" style="left:736px;top:0;width:119px;height:19px;background:#fafafa"></div><div class="abs" style="left:856px;top:0;width:119px;height:19px;background:#fafafa"></div><div class="abs" style="left:976px;top:0;width:119px;height:19px;background:#fafafa"></div><div class="abs" style="left:1096px;top:0;width:120px;height:19px;background:#fafafa"></div><div class="abs" style="left:1217px;top:0;width:347px;height:19px;background:#fafafa"></div></div><div class="row" style="top:558px;height:20px;overflow:hidden;left:338px;width:1564px;background:#e6e9ed"><div class="abs" style="left:0;top:0;width:15px;height:19px;background:#f1f3f5"></div><div class="abs" style="left:16px;top:0;width:119px;height:19px;background:#f7f8fa"></div><div class="abs" style="left:136px;top:0;width:119px;height:19px;background:#f7f8fa"></div><div class="abs" style="left:256px;top:0;width:119px;height:19px;background:#f7f8fa"></div><div class="abs" style="left:376px;top:0;width:119px;height:19px;background:#f7f8fa"></div><div class="abs" style="left:496px;top:0;width:119px;height:19px;background:#f7f8fa"></div><div class="abs" style="left:616px;top:0;width:119px;height:19px;background:#f7f8fa"></div><div class="abs" style="left:736px;top:0;width:119px;height:19px;background:#f7f8fa"></div><div class="abs" style="left:856px;top:0;width:119px;height:19px;background:#f7f8fa"></div><div class="abs" style="left:976px;top:0;width:119px;height:19px;background:#f7f8fa"></div><div class="abs" style="left:1096px;top:0;width:120px;height:19px;background:#f7f8fa"></div><div class="abs" style="left:1217px;top:0;width:347px;height:19px;background:#f2f4f6"></div></div><div class="row" style="top:578px;height:20px;overflow:hidden;left:338px;width:1564px;background:#e6e9ed"><div class="abs" style="left:0;top:0;width:15px;height:19px;background:#fafafa"></div><div class="abs" style="left:16px;top:0;width:119px;height:19px;background:#fafafa"></div><div class="abs" style="left:136px;top:0;width:119px;height:19px;background:#fafafa"></div><div class="abs" style="left:256px;top:0;width:119px;height:19px;background:#fafafa"></div><div class="abs" style="left:376px;top:0;width:119px;height:19px;background:#fafafa"></div><div class="abs" style="left:496px;top:0;width:119px;height:19px;background:#fafafa"></div><div class="abs" style="left:616px;top:0;width:119px;height:19px;background:#fafafa"></div><div class="abs" style="left:736px;top:0;width:119px;height:19px;background:#fafafa"></div><div class="abs" style="left:856px;top:0;width:119px;height:19px;background:#fafafa"></div><div class="abs" style="left:976px;top:0;width:119px;height:19px;background:#fafafa"></div><div class="abs" style="left:1096px;top:0;width:120px;height:19px;background:#fafafa"></div><div class="abs" style="left:1217px;top:0;width:347px;height:19px;background:#fafafa"></div></div><div class="row" style="top:598px;height:20px;overflow:hidden;left:338px;width:1564px;background:#e6e9ed"><div class="abs" style="left:0;top:0;width:15px;height:19px;background:#f1f3f5"></div><div class="abs" style="left:16px;top:0;width:119px;height:19px;background:#f7f8fa"></div><div class="abs" style="left:136px;top:0;width:119px;height:19px;background:#f7f8fa"></div><div class="abs" style="left:256px;top:0;width:119px;height:19px;background:#f7f8fa"></div><div class="abs" style="left:376px;top:0;width:119px;height:19px;background:#f7f8fa"></div><div class="abs" style="left:496px;top:0;width:119px;height:19px;background:#f7f8fa"></div><div class="abs" style="left:616px;top:0;width:119px;height:19px;background:#f7f8fa"></div><div class="abs" style="left:736px;top:0;width:119px;height:19px;background:#f7f8fa"></div><div class="abs" style="left:856px;top:0;width:119px;height:19px;background:#f7f8fa"></div><div class="abs" style="left:976px;top:0;width:119px;height:19px;background:#f7f8fa"></div><div class="abs" style="left:1096px;top:0;width:120px;height:19px;background:#f7f8fa"></div><div class="abs" style="left:1217px;top:0;width:347px;height:19px;background:#f2f4f6"></div></div><div class="row" style="top:618px;height:20px;overflow:hidden;left:338px;width:1564px;background:#e6e9ed"><div class="abs" style="left:0;top:0;width:15px;height:19px;background:#fafafa"></div><div class="abs" style="left:16px;top:0;width:119px;height:19px;background:#fafafa"></div><div class="abs" style="left:136px;top:0;width:119px;height:19px;background:#fafafa"></div><div class="abs" style="left:256px;top:0;width:119px;height:19px;background:#fafafa"></div><div class="abs" style="left:376px;top:0;width:119px;height:19px;background:#fafafa"></div><div class="abs" style="left:496px;top:0;width:119px;height:19px;background:#fafafa"></div><div class="abs" style="left:616px;top:0;width:119px;height:19px;background:#fafafa"></div><div class="abs" style="left:736px;top:0;width:119px;height:19px;background:#fafafa"></div><div class="abs" style="left:856px;top:0;width:119px;height:19px;background:#fafafa"></div><div class="abs" style="left:976px;top:0;width:119px;height:19px;background:#fafafa"></div><div class="abs" style="left:1096px;top:0;width:120px;height:19px;background:#fafafa"></div><div class="abs" style="left:1217px;top:0;width:347px;height:19px;background:#fafafa"></div></div><div class="row" style="top:638px;height:20px;overflow:hidden;left:338px;width:1564px;background:#e6e9ed"><div class="abs" style="left:0;top:0;width:15px;height:19px;background:#f1f3f5"></div><div class="abs" style="left:16px;top:0;width:119px;height:19px;background:#f7f8fa"></div><div class="abs" style="left:136px;top:0;width:119px;height:19px;background:#f7f8fa"></div><div class="abs" style="left:256px;top:0;width:119px;height:19px;background:#f7f8fa"></div><div class="abs" style="left:376px;top:0;width:119px;height:19px;background:#f7f8fa"></div><div class="abs" style="left:496px;top:0;width:119px;height:19px;background:#f7f8fa"></div><div class="abs" style="left:616px;top:0;width:119px;height:19px;background:#f7f8fa"></div><div class="abs" style="left:736px;top:0;width:119px;height:19px;background:#f7f8fa"></div><div class="abs" style="left:856px;top:0;width:119px;height:19px;background:#f7f8fa"></div><div class="abs" style="left:976px;top:0;width:119px;height:19px;background:#f7f8fa"></div><div class="abs" style="left:1096px;top:0;width:120px;height:19px;background:#f7f8fa"></div><div class="abs" style="left:1217px;top:0;width:347px;height:19px;background:#f2f4f6"></div></div><div class="row" style="top:658px;height:20px;overflow:hidden;left:338px;width:1564px;background:#e6e9ed"><div class="abs" style="left:0;top:0;width:15px;height:19px;background:#fafafa"></div><div class="abs" style="left:16px;top:0;width:119px;height:19px;background:#fafafa"></div><div class="abs" style="left:136px;top:0;width:119px;height:19px;background:#fafafa"></div><div class="abs" style="left:256px;top:0;width:119px;height:19px;background:#fafafa"></div><div class="abs" style="left:376px;top:0;width:119px;height:19px;background:#fafafa"></div><div class="abs" style="left:496px;top:0;width:119px;height:19px;background:#fafafa"></div><div class="abs" style="left:616px;top:0;width:119px;height:19px;background:#fafafa"></div><div class="abs" style="left:736px;top:0;width:119px;height:19px;background:#fafafa"></div><div class="abs" style="left:856px;top:0;width:119px;height:19px;background:#fafafa"></div><div class="abs" style="left:976px;top:0;width:119px;height:19px;background:#fafafa"></div><div class="abs" style="left:1096px;top:0;width:120px;height:19px;background:#fafafa"></div><div class="abs" style="left:1217px;top:0;width:347px;height:19px;background:#fafafa"></div></div><div class="row" style="top:678px;height:20px;overflow:hidden;left:338px;width:1564px;background:#e6e9ed"><div class="abs" style="left:0;top:0;width:15px;height:19px;background:#f1f3f5"></div><div class="abs" style="left:16px;top:0;width:119px;height:19px;background:#f7f8fa"></div><div class="abs" style="left:136px;top:0;width:119px;height:19px;background:#f7f8fa"></div><div class="abs" style="left:256px;top:0;width:119px;height:19px;background:#f7f8fa"></div><div class="abs" style="left:376px;top:0;width:119px;height:19px;background:#f7f8fa"></div><div class="abs" style="left:496px;top:0;width:119px;height:19px;background:#f7f8fa"></div><div class="abs" style="left:616px;top:0;width:119px;height:19px;background:#f7f8fa"></div><div class="abs" style="left:736px;top:0;width:119px;height:19px;background:#f7f8fa"></div><div class="abs" style="left:856px;top:0;width:119px;height:19px;background:#f7f8fa"></div><div class="abs" style="left:976px;top:0;width:119px;height:19px;background:#f7f8fa"></div><div class="abs" style="left:1096px;top:0;width:120px;height:19px;background:#f7f8fa"></div><div class="abs" style="left:1217px;top:0;width:347px;height:19px;background:#f2f4f6"></div></div><div class="row" style="top:698px;height:20px;overflow:hidden;left:338px;width:1564px;background:#e6e9ed"><div class="abs" style="left:0;top:0;width:15px;height:19px;background:#fafafa"></div><div class="abs" style="left:16px;top:0;width:119px;height:19px;background:#fafafa"></div><div class="abs" style="left:136px;top:0;width:119px;height:19px;background:#fafafa"></div><div class="abs" style="left:256px;top:0;width:119px;height:19px;background:#fafafa"></div><div class="abs" style="left:376px;top:0;width:119px;height:19px;background:#fafafa"></div><div class="abs" style="left:496px;top:0;width:119px;height:19px;background:#fafafa"></div><div class="abs" style="left:616px;top:0;width:119px;height:19px;background:#fafafa"></div><div class="abs" style="left:736px;top:0;width:119px;height:19px;background:#fafafa"></div><div class="abs" style="left:856px;top:0;width:119px;height:19px;background:#fafafa"></div><div class="abs" style="left:976px;top:0;width:119px;height:19px;background:#fafafa"></div><div class="abs" style="left:1096px;top:0;width:120px;height:19px;background:#fafafa"></div><div class="abs" style="left:1217px;top:0;width:347px;height:19px;background:#fafafa"></div></div><div class="row" style="top:718px;height:20px;overflow:hidden;left:338px;width:1564px;background:#e6e9ed"><div class="abs" style="left:0;top:0;width:15px;height:19px;background:#f1f3f5"></div><div class="abs" style="left:16px;top:0;width:119px;height:19px;background:#f7f8fa"></div><div class="abs" style="left:136px;top:0;width:119px;height:19px;background:#f7f8fa"></div><div class="abs" style="left:256px;top:0;width:119px;height:19px;background:#f7f8fa"></div><div class="abs" style="left:376px;top:0;width:119px;height:19px;background:#f7f8fa"></div><div class="abs" style="left:496px;top:0;width:119px;height:19px;background:#f7f8fa"></div><div class="abs" style="left:616px;top:0;width:119px;height:19px;background:#f7f8fa"></div><div class="abs" style="left:736px;top:0;width:119px;height:19px;background:#f7f8fa"></div><div class="abs" style="left:856px;top:0;width:119px;height:19px;background:#f7f8fa"></div><div class="abs" style="left:976px;top:0;width:119px;height:19px;background:#f7f8fa"></div><div class="abs" style="left:1096px;top:0;width:120px;height:19px;background:#f7f8fa"></div><div class="abs" style="left:1217px;top:0;width:347px;height:19px;background:#f2f4f6"></div></div><div class="row" style="top:738px;height:20px;overflow:hidden;left:338px;width:1564px;background:#e6e9ed"><div class="abs" style="left:0;top:0;width:15px;height:19px;background:#fafafa"></div><div class="abs" style="left:16px;top:0;width:119px;height:19px;background:#fafafa"></div><div class="abs" style="left:136px;top:0;width:119px;height:19px;background:#fafafa"></div><div class="abs" style="left:256px;top:0;width:119px;height:19px;background:#fafafa"></div><div class="abs" style="left:376px;top:0;width:119px;height:19px;background:#fafafa"></div><div class="abs" style="left:496px;top:0;width:119px;height:19px;background:#fafafa"></div><div class="abs" style="left:616px;top:0;width:119px;height:19px;background:#fafafa"></div><div class="abs" style="left:736px;top:0;width:119px;height:19px;background:#fafafa"></div><div class="abs" style="left:856px;top:0;width:119px;height:19px;background:#fafafa"></div><div class="abs" style="left:976px;top:0;width:119px;height:19px;background:#fafafa"></div><div class="abs" style="left:1096px;top:0;width:120px;height:19px;background:#fafafa"></div><div class="abs" style="left:1217px;top:0;width:347px;height:19px;background:#fafafa"></div></div><div class="row" style="top:758px;height:20px;overflow:hidden;left:338px;width:1564px;background:#e6e9ed"><div class="abs" style="left:0;top:0;width:15px;height:19px;background:#f1f3f5"></div><div class="abs" style="left:16px;top:0;width:119px;height:19px;background:#f7f8fa"></div><div class="abs" style="left:136px;top:0;width:119px;height:19px;background:#f7f8fa"></div><div class="abs" style="left:256px;top:0;width:119px;height:19px;background:#f7f8fa"></div><div class="abs" style="left:376px;top:0;width:119px;height:19px;background:#f7f8fa"></div><div class="abs" style="left:496px;top:0;width:119px;height:19px;background:#f7f8fa"></div><div class="abs" style="left:616px;top:0;width:119px;height:19px;background:#f7f8fa"></div><div class="abs" style="left:736px;top:0;width:119px;height:19px;background:#f7f8fa"></div><div class="abs" style="left:856px;top:0;width:119px;height:19px;background:#f7f8fa"></div><div class="abs" style="left:976px;top:0;width:119px;height:19px;background:#f7f8fa"></div><div class="abs" style="left:1096px;top:0;width:120px;height:19px;background:#f7f8fa"></div><div class="abs" style="left:1217px;top:0;width:347px;height:19px;background:#f2f4f6"></div></div><div class="row" style="top:778px;height:20px;overflow:hidden;left:338px;width:1564px;background:#e6e9ed"><div class="abs" style="left:0;top:0;width:15px;height:19px;background:#fafafa"></div><div class="abs" style="left:16px;top:0;width:119px;height:19px;background:#fafafa"></div><div class="abs" style="left:136px;top:0;width:119px;height:19px;background:#fafafa"></div><div class="abs" style="left:256px;top:0;width:119px;height:19px;background:#fafafa"></div><div class="abs" style="left:376px;top:0;width:119px;height:19px;background:#fafafa"></div><div class="abs" style="left:496px;top:0;width:119px;height:19px;background:#fafafa"></div><div class="abs" style="left:616px;top:0;width:119px;height:19px;background:#fafafa"></div><div class="abs" style="left:736px;top:0;width:119px;height:19px;background:#fafafa"></div><div class="abs" style="left:856px;top:0;width:119px;height:19px;background:#fafafa"></div><div class="abs" style="left:976px;top:0;width:119px;height:19px;background:#fafafa"></div><div class="abs" style="left:1096px;top:0;width:120px;height:19px;background:#fafafa"></div><div class="abs" style="left:1217px;top:0;width:347px;height:19px;background:#fafafa"></div></div><div class="row" style="top:798px;height:20px;overflow:hidden;left:338px;width:1564px;background:#e6e9ed"><div class="abs" style="left:0;top:0;width:15px;height:19px;background:#f1f3f5"></div><div class="abs" style="left:16px;top:0;width:119px;height:19px;background:#f7f8fa"></div><div class="abs" style="left:136px;top:0;width:119px;height:19px;background:#f7f8fa"></div><div class="abs" style="left:256px;top:0;width:119px;height:19px;background:#f7f8fa"></div><div class="abs" style="left:376px;top:0;width:119px;height:19px;background:#f7f8fa"></div><div class="abs" style="left:496px;top:0;width:119px;height:19px;background:#f7f8fa"></div><div class="abs" style="left:616px;top:0;width:119px;height:19px;background:#f7f8fa"></div><div class="abs" style="left:736px;top:0;width:119px;height:19px;background:#f7f8fa"></div><div class="abs" style="left:856px;top:0;width:119px;height:19px;background:#f7f8fa"></div><div class="abs" style="left:976px;top:0;width:119px;height:19px;background:#f7f8fa"></div><div class="abs" style="left:1096px;top:0;width:120px;height:19px;background:#f7f8fa"></div><div class="abs" style="left:1217px;top:0;width:347px;height:19px;background:#f2f4f6"></div></div><div class="row" style="top:818px;height:20px;overflow:hidden;left:338px;width:1564px;background:#e6e9ed"><div class="abs" style="left:0;top:0;width:15px;height:19px;background:#fafafa"></div><div class="abs" style="left:16px;top:0;width:119px;height:19px;background:#fafafa"></div><div class="abs" style="left:136px;top:0;width:119px;height:19px;background:#fafafa"></div><div class="abs" style="left:256px;top:0;width:119px;height:19px;background:#fafafa"></div><div class="abs" style="left:376px;top:0;width:119px;height:19px;background:#fafafa"></div><div class="abs" style="left:496px;top:0;width:119px;height:19px;background:#fafafa"></div><div class="abs" style="left:616px;top:0;width:119px;height:19px;background:#fafafa"></div><div class="abs" style="left:736px;top:0;width:119px;height:19px;background:#fafafa"></div><div class="abs" style="left:856px;top:0;width:119px;height:19px;background:#fafafa"></div><div class="abs" style="left:976px;top:0;width:119px;height:19px;background:#fafafa"></div><div class="abs" style="left:1096px;top:0;width:120px;height:19px;background:#fafafa"></div><div class="abs" style="left:1217px;top:0;width:347px;height:19px;background:#fafafa"></div></div><div class="row" style="top:838px;height:20px;overflow:hidden;left:338px;width:1564px;background:#e6e9ed"><div class="abs" style="left:0;top:0;width:15px;height:19px;background:#f1f3f5"></div><div class="abs" style="left:16px;top:0;width:119px;height:19px;background:#f7f8fa"></div><div class="abs" style="left:136px;top:0;width:119px;height:19px;background:#f7f8fa"></div><div class="abs" style="left:256px;top:0;width:119px;height:19px;background:#f7f8fa"></div><div class="abs" style="left:376px;top:0;width:119px;height:19px;background:#f7f8fa"></div><div class="abs" style="left:496px;top:0;width:119px;height:19px;background:#f7f8fa"></div><div class="abs" style="left:616px;top:0;width:119px;height:19px;background:#f7f8fa"></div><div class="abs" style="left:736px;top:0;width:119px;height:19px;background:#f7f8fa"></div><div class="abs" style="left:856px;top:0;width:119px;height:19px;background:#f7f8fa"></div><div class="abs" style="left:976px;top:0;width:119px;height:19px;background:#f7f8fa"></div><div class="abs" style="left:1096px;top:0;width:120px;height:19px;background:#f7f8fa"></div><div class="abs" style="left:1217px;top:0;width:347px;height:19px;background:#f2f4f6"></div></div><div class="row" style="top:858px;height:20px;overflow:hidden;left:338px;width:1564px;background:#e6e9ed"><div class="abs" style="left:0;top:0;width:15px;height:19px;background:#fafafa"></div><div class="abs" style="left:16px;top:0;width:119px;height:19px;background:#fafafa"></div><div class="abs" style="left:136px;top:0;width:119px;height:19px;background:#fafafa"></div><div class="abs" style="left:256px;top:0;width:119px;height:19px;background:#fafafa"></div><div class="abs" style="left:376px;top:0;width:119px;height:19px;background:#fafafa"></div><div class="abs" style="left:496px;top:0;width:119px;height:19px;background:#fafafa"></div><div class="abs" style="left:616px;top:0;width:119px;height:19px;background:#fafafa"></div><div class="abs" style="left:736px;top:0;width:119px;height:19px;background:#fafafa"></div><div class="abs" style="left:856px;top:0;width:119px;height:19px;background:#fafafa"></div><div class="abs" style="left:976px;top:0;width:119px;height:19px;background:#fafafa"></div><div class="abs" style="left:1096px;top:0;width:120px;height:19px;background:#fafafa"></div><div class="abs" style="left:1217px;top:0;width:347px;height:19px;background:#fafafa"></div></div><div class="row" style="top:878px;height:20px;overflow:hidden;left:338px;width:1564px;background:#e6e9ed"><div class="abs" style="left:0;top:0;width:15px;height:19px;background:#f1f3f5"></div><div class="abs" style="left:16px;top:0;width:119px;height:19px;background:#f7f8fa"></div><div class="abs" style="left:136px;top:0;width:119px;height:19px;background:#f7f8fa"></div><div class="abs" style="left:256px;top:0;width:119px;height:19px;background:#f7f8fa"></div><div class="abs" style="left:376px;top:0;width:119px;height:19px;background:#f7f8fa"></div><div class="abs" style="left:496px;top:0;width:119px;height:19px;background:#f7f8fa"></div><div class="abs" style="left:616px;top:0;width:119px;height:19px;background:#f7f8fa"></div><div class="abs" style="left:736px;top:0;width:119px;height:19px;background:#f7f8fa"></div><div class="abs" style="left:856px;top:0;width:119px;height:19px;background:#f7f8fa"></div><div class="abs" style="left:976px;top:0;width:119px;height:19px;background:#f7f8fa"></div><div class="abs" style="left:1096px;top:0;width:120px;height:19px;background:#f7f8fa"></div><div class="abs" style="left:1217px;top:0;width:347px;height:19px;background:#f2f4f6"></div></div><div class="row" style="top:898px;height:20px;overflow:hidden;left:338px;width:1564px;background:#e6e9ed"><div class="abs" style="left:0;top:0;width:15px;height:19px;background:#fafafa"></div><div class="abs" style="left:16px;top:0;width:119px;height:19px;background:#fafafa"></div><div class="abs" style="left:136px;top:0;width:119px;height:19px;background:#fafafa"></div><div class="abs" style="left:256px;top:0;width:119px;height:19px;background:#fafafa"></div><div class="abs" style="left:376px;top:0;width:119px;height:19px;background:#fafafa"></div><div class="abs" style="left:496px;top:0;width:119px;height:19px;background:#fafafa"></div><div class="abs" style="left:616px;top:0;width:119px;height:19px;background:#fafafa"></div><div class="abs" style="left:736px;top:0;width:119px;height:19px;background:#fafafa"></div><div class="abs" style="left:856px;top:0;width:119px;height:19px;background:#fafafa"></div><div class="abs" style="left:976px;top:0;width:119px;height:19px;background:#fafafa"></div><div class="abs" style="left:1096px;top:0;width:120px;height:19px;background:#fafafa"></div><div class="abs" style="left:1217px;top:0;width:347px;height:19px;background:#fafafa"></div></div><div class="row" style="top:918px;height:20px;overflow:hidden;left:338px;width:1564px;background:#e6e9ed"><div class="abs" style="left:0;top:0;width:15px;height:19px;background:#f1f3f5"></div><div class="abs" style="left:16px;top:0;width:119px;height:19px;background:#f7f8fa"></div><div class="abs" style="left:136px;top:0;width:119px;height:19px;background:#f7f8fa"></div><div class="abs" style="left:256px;top:0;width:119px;height:19px;background:#f7f8fa"></div><div class="abs" style="left:376px;top:0;width:119px;height:19px;background:#f7f8fa"></div><div class="abs" style="left:496px;top:0;width:119px;height:19px;background:#f7f8fa"></div><div class="abs" style="left:616px;top:0;width:119px;height:19px;background:#f7f8fa"></div><div class="abs" style="left:736px;top:0;width:119px;height:19px;background:#f7f8fa"></div><div class="abs" style="left:856px;top:0;width:119px;height:19px;background:#f7f8fa"></div><div class="abs" style="left:976px;top:0;width:119px;height:19px;background:#f7f8fa"></div><div class="abs" style="left:1096px;top:0;width:120px;height:19px;background:#f7f8fa"></div><div class="abs" style="left:1217px;top:0;width:347px;height:19px;background:#f2f4f6"></div></div><div class="row" style="top:938px;height:20px;overflow:hidden;left:338px;width:1564px;background:#e6e9ed"><div class="abs" style="left:0;top:0;width:15px;height:19px;background:#fafafa"></div><div class="abs" style="left:16px;top:0;width:119px;height:19px;background:#fafafa"></div><div class="abs" style="left:136px;top:0;width:119px;height:19px;background:#fafafa"></div><div class="abs" style="left:256px;top:0;width:119px;height:19px;background:#fafafa"></div><div class="abs" style="left:376px;top:0;width:119px;height:19px;background:#fafafa"></div><div class="abs" style="left:496px;top:0;width:119px;height:19px;background:#fafafa"></div><div class="abs" style="left:616px;top:0;width:119px;height:19px;background:#fafafa"></div><div class="abs" style="left:736px;top:0;width:119px;height:19px;background:#fafafa"></div><div class="abs" style="left:856px;top:0;width:119px;height:19px;background:#fafafa"></div><div class="abs" style="left:976px;top:0;width:119px;height:19px;background:#fafafa"></div><div class="abs" style="left:1096px;top:0;width:120px;height:19px;background:#fafafa"></div><div class="abs" style="left:1217px;top:0;width:347px;height:19px;background:#fafafa"></div></div><div class="row" style="top:958px;height:20px;overflow:hidden;left:338px;width:1564px;background:#e6e9ed"><div class="abs" style="left:0;top:0;width:15px;height:19px;background:#f1f3f5"></div><div class="abs" style="left:16px;top:0;width:119px;height:19px;background:#f7f8fa"></div><div class="abs" style="left:136px;top:0;width:119px;height:19px;background:#f7f8fa"></div><div class="abs" style="left:256px;top:0;width:119px;height:19px;background:#f7f8fa"></div><div class="abs" style="left:376px;top:0;width:119px;height:19px;background:#f7f8fa"></div><div class="abs" style="left:496px;top:0;width:119px;height:19px;background:#f7f8fa"></div><div class="abs" style="left:616px;top:0;width:119px;height:19px;background:#f7f8fa"></div><div class="abs" style="left:736px;top:0;width:119px;height:19px;background:#f7f8fa"></div><div class="abs" style="left:856px;top:0;width:119px;height:19px;background:#f7f8fa"></div><div class="abs" style="left:976px;top:0;width:119px;height:19px;background:#f7f8fa"></div><div class="abs" style="left:1096px;top:0;width:120px;height:19px;background:#f7f8fa"></div><div class="abs" style="left:1217px;top:0;width:347px;height:19px;background:#f2f4f6"></div></div><div class="row" style="top:978px;height:20px;overflow:hidden;left:338px;width:1564px;background:#e6e9ed"><div class="abs" style="left:0;top:0;width:15px;height:19px;background:#fafafa"></div><div class="abs" style="left:16px;top:0;width:119px;height:19px;background:#fafafa"></div><div class="abs" style="left:136px;top:0;width:119px;height:19px;background:#fafafa"></div><div class="abs" style="left:256px;top:0;width:119px;height:19px;background:#fafafa"></div><div class="abs" style="left:376px;top:0;width:119px;height:19px;background:#fafafa"></div><div class="abs" style="left:496px;top:0;width:119px;height:19px;background:#fafafa"></div><div class="abs" style="left:616px;top:0;width:119px;height:19px;background:#fafafa"></div><div class="abs" style="left:736px;top:0;width:119px;height:19px;background:#fafafa"></div><div class="abs" style="left:856px;top:0;width:119px;height:19px;background:#fafafa"></div><div class="abs" style="left:976px;top:0;width:119px;height:19px;background:#fafafa"></div><div class="abs" style="left:1096px;top:0;width:120px;height:19px;background:#fafafa"></div><div class="abs" style="left:1217px;top:0;width:347px;height:19px;background:#fafafa"></div></div><div class="row" style="top:998px;height:5px;overflow:hidden;left:338px;width:1564px;background:#e6e9ed"><div class="abs" style="left:0;top:0;width:15px;height:19px;background:#f1f3f5"></div><div class="abs" style="left:16px;top:0;width:119px;height:19px;background:#f7f8fa"></div><div class="abs" style="left:136px;top:0;width:119px;height:19px;background:#f7f8fa"></div><div class="abs" style="left:256px;top:0;width:119px;height:19px;background:#f7f8fa"></div><div class="abs" style="left:376px;top:0;width:119px;height:19px;background:#f7f8fa"></div><div class="abs" style="left:496px;top:0;width:119px;height:19px;background:#f7f8fa"></div><div class="abs" style="left:616px;top:0;width:119px;height:19px;background:#f7f8fa"></div><div class="abs" style="left:736px;top:0;width:119px;height:19px;background:#f7f8fa"></div><div class="abs" style="left:856px;top:0;width:119px;height:19px;background:#f7f8fa"></div><div class="abs" style="left:976px;top:0;width:119px;height:19px;background:#f7f8fa"></div><div class="abs" style="left:1096px;top:0;width:120px;height:19px;background:#f7f8fa"></div><div class="abs" style="left:1217px;top:0;width:347px;height:19px;background:#f2f4f6"></div></div><div class="abs" style="left:353px;top:216px;width:1px;height:21px;background:#cbd4de;"></div><div class="abs" style="left:473px;top:216px;width:1px;height:21px;background:#cbd4de;"></div><div class="abs" style="left:593px;top:216px;width:1px;height:21px;background:#cbd4de;"></div><div class="abs" style="left:713px;top:216px;width:1px;height:21px;background:#cbd4de;"></div><div class="abs" style="left:833px;top:216px;width:1px;height:21px;background:#cbd4de;"></div><div class="abs" style="left:953px;top:216px;width:1px;height:21px;background:#cbd4de;"></div><div class="abs" style="left:1073px;top:216px;width:1px;height:21px;background:#cbd4de;"></div><div class="abs" style="left:1193px;top:216px;width:1px;height:21px;background:#cbd4de;"></div><div class="abs" style="left:1313px;top:216px;width:1px;height:21px;background:#cbd4de;"></div><div class="abs" style="left:1433px;top:216px;width:1px;height:21px;background:#cbd4de;"></div><div class="abs" style="left:1554px;top:216px;width:1px;height:21px;background:#cbd4de;"></div><div class="abs" style="left:338px;top:237px;width:1581px;height:1px;background:#c9d4df;"></div><div class="t" style="left:358.5px;top:221.69px;font-size:11px;color:#4c7aa6;letter-spacing:0.3px">From</div><div class="t" style="left:390px;width:200px;text-align:right;top:221.69px;font-size:11px;color:#4c7aa6;letter-spacing:0.3px">Time</div><div class="t" style="left:598px;top:221.69px;font-size:11px;color:#4c7aa6;letter-spacing:0.3px">To</div><div class="t" style="left:630px;width:200px;text-align:right;top:221.69px;font-size:11px;color:#4c7aa6;letter-spacing:0.3px">Time</div><div class="t" style="left:838.5px;top:221.69px;font-size:11px;color:#4c7aa6;letter-spacing:0.3px">Time mode</div><div class="t" style="left:958.5px;top:221.69px;font-size:11px;color:#4c7aa6;letter-spacing:0.3px">Description</div><div class="t" style="left:990px;width:200px;text-align:right;top:221.69px;font-size:11px;color:#4c7aa6;letter-spacing:0.3px">Break 1 from</div><div class="t" style="left:1110px;width:200px;text-align:right;top:221.69px;font-size:11px;color:#4c7aa6;letter-spacing:0.3px">Break 1 to</div><div class="t" style="left:1230px;width:200px;text-align:right;top:221.69px;font-size:11px;color:#4c7aa6;letter-spacing:0.3px">Break 2 from</div><div class="t" style="left:1350px;width:200px;text-align:right;top:221.69px;font-size:11px;color:#4c7aa6;letter-spacing:0.3px">Break 2 to</div><div class="t" style="left:359.5px;top:241.69px;font-size:11px;color:#1e1e1e;">18/03/2019</div><div class="t r" style="left:388px;width:200px;top:241.69px;font-size:11px;color:#1e1e1e">06:00:00</div><div class="t" style="left:599.5px;top:241.69px;font-size:11px;color:#1e1e1e;">18/03/2019</div><div class="t r" style="left:628px;width:200px;top:241.69px;font-size:11px;color:#1e1e1e">14:00:00</div><div class="t" style="left:839.5px;top:241.69px;font-size:11px;color:#5c5c5c;letter-spacing:0.23px">Frühschicht</div><div class="t" style="left:959px;top:241.69px;font-size:11px;color:#1e1e1e;letter-spacing:0.23px">Frühschicht</div><div class="t r" style="left:988px;width:200px;top:241.69px;font-size:11px;color:#1e1e1e">10:00:00</div><div class="t r" style="left:1108px;width:200px;top:241.69px;font-size:11px;color:#1e1e1e">10:15:00</div><div class="t r" style="left:1228px;width:200px;top:241.69px;font-size:11px;color:#1e1e1e">12:00:00</div><div class="t r" style="left:1349px;width:200px;top:241.69px;font-size:11px;color:#1e1e1e">12:30:00</div><div class="t" style="left:359.5px;top:261.69px;font-size:11px;color:#1e1e1e;">18/03/2019</div><div class="t r" style="left:388px;width:200px;top:261.69px;font-size:11px;color:#1e1e1e">14:00:00</div><div class="t" style="left:599.5px;top:261.69px;font-size:11px;color:#1e1e1e;">18/03/2019</div><div class="t r" style="left:628px;width:200px;top:261.69px;font-size:11px;color:#1e1e1e">22:00:00</div><div class="t" style="left:839.5px;top:261.69px;font-size:11px;color:#5c5c5c;letter-spacing:0.23px">Spätschicht</div><div class="t" style="left:959px;top:261.69px;font-size:11px;color:#1e1e1e;letter-spacing:0.23px">Spätschicht</div><div class="t" style="left:359.5px;top:281.69px;font-size:11px;color:#1e1e1e;">18/03/2019</div><div class="t r" style="left:388px;width:200px;top:281.69px;font-size:11px;color:#1e1e1e">22:00:00</div><div class="t" style="left:599.5px;top:281.69px;font-size:11px;color:#1e1e1e;">19/03/2019</div><div class="t r" style="left:628px;width:200px;top:281.69px;font-size:11px;color:#1e1e1e">06:00:00</div><div class="t" style="left:959px;top:281.69px;font-size:11px;color:#1e1e1e;letter-spacing:0.23px">Nachtschicht</div><div class="t" style="left:359.5px;top:301.69px;font-size:11px;color:#1e1e1e;">19/03/2019</div><div class="t r" style="left:388px;width:200px;top:301.69px;font-size:11px;color:#1e1e1e">06:00:00</div><div class="t" style="left:599.5px;top:301.69px;font-size:11px;color:#1e1e1e;">19/03/2019</div><div class="t r" style="left:628px;width:200px;top:301.69px;font-size:11px;color:#1e1e1e">14:00:00</div><div class="t" style="left:839.5px;top:301.69px;font-size:11px;color:#5c5c5c;letter-spacing:0.23px">Frühschicht</div><div class="t" style="left:959px;top:301.69px;font-size:11px;color:#1e1e1e;letter-spacing:0.23px">Frühschicht</div><div class="t r" style="left:988px;width:200px;top:301.69px;font-size:11px;color:#1e1e1e">10:00:00</div><div class="t r" style="left:1108px;width:200px;top:301.69px;font-size:11px;color:#1e1e1e">10:15:00</div><div class="t r" style="left:1228px;width:200px;top:301.69px;font-size:11px;color:#1e1e1e">12:00:00</div><div class="t r" style="left:1349px;width:200px;top:301.69px;font-size:11px;color:#1e1e1e">12:30:00</div><div class="t" style="left:359.5px;top:321.69px;font-size:11px;color:#1e1e1e;">19/03/2019</div><div class="t r" style="left:388px;width:200px;top:321.69px;font-size:11px;color:#1e1e1e">14:00:00</div><div class="t" style="left:599.5px;top:321.69px;font-size:11px;color:#1e1e1e;">19/03/2019</div><div class="t r" style="left:628px;width:200px;top:321.69px;font-size:11px;color:#1e1e1e">22:00:00</div><div class="t" style="left:839.5px;top:321.69px;font-size:11px;color:#5c5c5c;letter-spacing:0.23px">Spätschicht</div><div class="t" style="left:959px;top:321.69px;font-size:11px;color:#1e1e1e;letter-spacing:0.23px">Spätschicht</div><div class="t" style="left:359.5px;top:341.69px;font-size:11px;color:#1e1e1e;">19/03/2019</div><div class="t r" style="left:388px;width:200px;top:341.69px;font-size:11px;color:#1e1e1e">22:00:00</div><div class="t" style="left:599.5px;top:341.69px;font-size:11px;color:#1e1e1e;">20/03/2019</div><div class="t r" style="left:628px;width:200px;top:341.69px;font-size:11px;color:#1e1e1e">06:00:00</div><div class="t" style="left:959px;top:341.69px;font-size:11px;color:#1e1e1e;letter-spacing:0.23px">Nachtschicht</div><div class="t" style="left:359.5px;top:361.69px;font-size:11px;color:#1e1e1e;">20/03/2019</div><div class="t r" style="left:388px;width:200px;top:361.69px;font-size:11px;color:#1e1e1e">06:00:00</div><div class="t" style="left:599.5px;top:361.69px;font-size:11px;color:#1e1e1e;">20/03/2019</div><div class="t r" style="left:628px;width:200px;top:361.69px;font-size:11px;color:#1e1e1e">14:00:00</div><div class="t" style="left:839.5px;top:361.69px;font-size:11px;color:#5c5c5c;letter-spacing:0.23px">Frühschicht</div><div class="t" style="left:959px;top:361.69px;font-size:11px;color:#1e1e1e;letter-spacing:0.23px">Frühschicht</div><div class="t r" style="left:988px;width:200px;top:361.69px;font-size:11px;color:#1e1e1e">10:00:00</div><div class="t r" style="left:1108px;width:200px;top:361.69px;font-size:11px;color:#1e1e1e">10:15:00</div><div class="t r" style="left:1228px;width:200px;top:361.69px;font-size:11px;color:#1e1e1e">12:00:00</div><div class="t r" style="left:1349px;width:200px;top:361.69px;font-size:11px;color:#1e1e1e">12:30:00</div><div class="t" style="left:359.5px;top:381.69px;font-size:11px;color:#1e1e1e;">20/03/2019</div><div class="t r" style="left:388px;width:200px;top:381.69px;font-size:11px;color:#1e1e1e">14:00:00</div><div class="t" style="left:599.5px;top:381.69px;font-size:11px;color:#1e1e1e;">20/03/2019</div><div class="t r" style="left:628px;width:200px;top:381.69px;font-size:11px;color:#1e1e1e">22:00:00</div><div class="t" style="left:839.5px;top:381.69px;font-size:11px;color:#5c5c5c;letter-spacing:0.23px">Spätschicht</div><div class="t" style="left:959px;top:381.69px;font-size:11px;color:#1e1e1e;letter-spacing:0.23px">Spätschicht</div><div class="t" style="left:359.5px;top:401.69px;font-size:11px;color:#1e1e1e;">20/03/2019</div><div class="t r" style="left:388px;width:200px;top:401.69px;font-size:11px;color:#1e1e1e">22:00:00</div><div class="t" style="left:599.5px;top:401.69px;font-size:11px;color:#1e1e1e;">21/03/2019</div><div class="t r" style="left:628px;width:200px;top:401.69px;font-size:11px;color:#1e1e1e">06:00:00</div><div class="t" style="left:959px;top:401.69px;font-size:11px;color:#1e1e1e;letter-spacing:0.23px">Nachtschicht</div><div class="t" style="left:359.5px;top:421.69px;font-size:11px;color:#1e1e1e;">21/03/2019</div><div class="t r" style="left:388px;width:200px;top:421.69px;font-size:11px;color:#1e1e1e">06:00:00</div><div class="t" style="left:599.5px;top:421.69px;font-size:11px;color:#1e1e1e;">21/03/2019</div><div class="t r" style="left:628px;width:200px;top:421.69px;font-size:11px;color:#1e1e1e">14:00:00</div><div class="t" style="left:839.5px;top:421.69px;font-size:11px;color:#5c5c5c;letter-spacing:0.23px">Frühschicht</div><div class="t" style="left:959px;top:421.69px;font-size:11px;color:#1e1e1e;letter-spacing:0.23px">Frühschicht</div><div class="t r" style="left:988px;width:200px;top:421.69px;font-size:11px;color:#1e1e1e">10:00:00</div><div class="t r" style="left:1108px;width:200px;top:421.69px;font-size:11px;color:#1e1e1e">10:15:00</div><div class="t r" style="left:1228px;width:200px;top:421.69px;font-size:11px;color:#1e1e1e">12:00:00</div><div class="t r" style="left:1349px;width:200px;top:421.69px;font-size:11px;color:#1e1e1e">12:30:00</div><div class="t" style="left:359.5px;top:441.69px;font-size:11px;color:#1e1e1e;">21/03/2019</div><div class="t r" style="left:388px;width:200px;top:441.69px;font-size:11px;color:#1e1e1e">14:00:00</div><div class="t" style="left:599.5px;top:441.69px;font-size:11px;color:#1e1e1e;">21/03/2019</div><div class="t r" style="left:628px;width:200px;top:441.69px;font-size:11px;color:#1e1e1e">22:00:00</div><div class="t" style="left:839.5px;top:441.69px;font-size:11px;color:#5c5c5c;letter-spacing:0.23px">Spätschicht</div><div class="t" style="left:959px;top:441.69px;font-size:11px;color:#1e1e1e;letter-spacing:0.23px">Spätschicht</div><div class="t" style="left:359.5px;top:461.69px;font-size:11px;color:#1e1e1e;">21/03/2019</div><div class="t r" style="left:388px;width:200px;top:461.69px;font-size:11px;color:#1e1e1e">22:00:00</div><div class="t" style="left:599.5px;top:461.69px;font-size:11px;color:#1e1e1e;">22/03/2019</div><div class="t r" style="left:628px;width:200px;top:461.69px;font-size:11px;color:#1e1e1e">06:00:00</div><div class="t" style="left:959px;top:461.69px;font-size:11px;color:#1e1e1e;letter-spacing:0.23px">Nachtschicht</div><div class="t" style="left:359.5px;top:481.69px;font-size:11px;color:#1e1e1e;">22/03/2019</div><div class="t r" style="left:388px;width:200px;top:481.69px;font-size:11px;color:#1e1e1e">06:00:00</div><div class="t" style="left:599.5px;top:481.69px;font-size:11px;color:#1e1e1e;">22/03/2019</div><div class="t r" style="left:628px;width:200px;top:481.69px;font-size:11px;color:#1e1e1e">14:00:00</div><div class="t" style="left:839.5px;top:481.69px;font-size:11px;color:#5c5c5c;letter-spacing:0.23px">Frühschicht</div><div class="t" style="left:959px;top:481.69px;font-size:11px;color:#1e1e1e;letter-spacing:0.23px">Frühschicht</div><div class="t r" style="left:988px;width:200px;top:481.69px;font-size:11px;color:#1e1e1e">10:00:00</div><div class="t r" style="left:1108px;width:200px;top:481.69px;font-size:11px;color:#1e1e1e">10:15:00</div><div class="t r" style="left:1228px;width:200px;top:481.69px;font-size:11px;color:#1e1e1e">12:00:00</div><div class="t r" style="left:1349px;width:200px;top:481.69px;font-size:11px;color:#1e1e1e">12:30:00</div><div class="t" style="left:359.5px;top:501.69px;font-size:11px;color:#1e1e1e;">22/03/2019</div><div class="t r" style="left:388px;width:200px;top:501.69px;font-size:11px;color:#1e1e1e">14:00:00</div><div class="t" style="left:599.5px;top:501.69px;font-size:11px;color:#1e1e1e;">22/03/2019</div><div class="t r" style="left:628px;width:200px;top:501.69px;font-size:11px;color:#1e1e1e">22:00:00</div><div class="t" style="left:839.5px;top:501.69px;font-size:11px;color:#5c5c5c;letter-spacing:0.23px">Spätschicht</div><div class="t" style="left:959px;top:501.69px;font-size:11px;color:#1e1e1e;letter-spacing:0.23px">Spätschicht</div><div class="t" style="left:359.5px;top:521.69px;font-size:11px;color:#1e1e1e;">22/03/2019</div><div class="t r" style="left:388px;width:200px;top:521.69px;font-size:11px;color:#1e1e1e">22:00:00</div><div class="t" style="left:599.5px;top:521.69px;font-size:11px;color:#1e1e1e;">23/03/2019</div><div class="t r" style="left:628px;width:200px;top:521.69px;font-size:11px;color:#1e1e1e">06:00:00</div><div class="t" style="left:959px;top:521.69px;font-size:11px;color:#1e1e1e;letter-spacing:0.23px">Nachtschicht</div><div class="t" style="left:359.5px;top:541.69px;font-size:11px;color:#1e1e1e;">23/03/2019</div><div class="t r" style="left:388px;width:200px;top:541.69px;font-size:11px;color:#1e1e1e">00:00:00</div><div class="t" style="left:599.5px;top:541.69px;font-size:11px;color:#1e1e1e;">23/03/2019</div><div class="t r" style="left:628px;width:200px;top:541.69px;font-size:11px;color:#1e1e1e">23:59:00</div><div class="t" style="left:959px;top:541.69px;font-size:11px;color:#1e1e1e;letter-spacing:0.23px">Frei</div><div class="t" style="left:359.5px;top:561.69px;font-size:11px;color:#1e1e1e;">24/03/2019</div><div class="t r" style="left:388px;width:200px;top:561.69px;font-size:11px;color:#1e1e1e">00:00:00</div><div class="t" style="left:599.5px;top:561.69px;font-size:11px;color:#1e1e1e;">24/03/2019</div><div class="t r" style="left:628px;width:200px;top:561.69px;font-size:11px;color:#1e1e1e">23:59:00</div><div class="t" style="left:959px;top:561.69px;font-size:11px;color:#1e1e1e;letter-spacing:0.23px">Frei</div><div class="t" style="left:359.5px;top:581.69px;font-size:11px;color:#1e1e1e;">25/03/2019</div><div class="t r" style="left:388px;width:200px;top:581.69px;font-size:11px;color:#1e1e1e">06:00:00</div><div class="t" style="left:599.5px;top:581.69px;font-size:11px;color:#1e1e1e;">25/03/2019</div><div class="t r" style="left:628px;width:200px;top:581.69px;font-size:11px;color:#1e1e1e">14:00:00</div><div class="t" style="left:839.5px;top:581.69px;font-size:11px;color:#5c5c5c;letter-spacing:0.23px">Frühschicht</div><div class="t" style="left:959px;top:581.69px;font-size:11px;color:#1e1e1e;letter-spacing:0.23px">Frühschicht</div><div class="t r" style="left:988px;width:200px;top:581.69px;font-size:11px;color:#1e1e1e">10:00:00</div><div class="t r" style="left:1108px;width:200px;top:581.69px;font-size:11px;color:#1e1e1e">10:15:00</div><div class="t r" style="left:1228px;width:200px;top:581.69px;font-size:11px;color:#1e1e1e">12:00:00</div><div class="t r" style="left:1349px;width:200px;top:581.69px;font-size:11px;color:#1e1e1e">12:30:00</div><div class="t" style="left:359.5px;top:601.69px;font-size:11px;color:#1e1e1e;">25/03/2019</div><div class="t r" style="left:388px;width:200px;top:601.69px;font-size:11px;color:#1e1e1e">14:00:00</div><div class="t" style="left:599.5px;top:601.69px;font-size:11px;color:#1e1e1e;">25/03/2019</div><div class="t r" style="left:628px;width:200px;top:601.69px;font-size:11px;color:#1e1e1e">22:00:00</div><div class="t" style="left:839.5px;top:601.69px;font-size:11px;color:#5c5c5c;letter-spacing:0.23px">Spätschicht</div><div class="t" style="left:959px;top:601.69px;font-size:11px;color:#1e1e1e;letter-spacing:0.23px">Spätschicht</div><div class="t" style="left:359.5px;top:621.69px;font-size:11px;color:#1e1e1e;">25/03/2019</div><div class="t r" style="left:388px;width:200px;top:621.69px;font-size:11px;color:#1e1e1e">22:00:00</div><div class="t" style="left:599.5px;top:621.69px;font-size:11px;color:#1e1e1e;">26/03/2019</div><div class="t r" style="left:628px;width:200px;top:621.69px;font-size:11px;color:#1e1e1e">06:00:00</div><div class="t" style="left:959px;top:621.69px;font-size:11px;color:#1e1e1e;letter-spacing:0.23px">Nachtschicht</div><div class="t" style="left:359.5px;top:641.69px;font-size:11px;color:#1e1e1e;">26/03/2019</div><div class="t r" style="left:388px;width:200px;top:641.69px;font-size:11px;color:#1e1e1e">06:00:00</div><div class="t" style="left:599.5px;top:641.69px;font-size:11px;color:#1e1e1e;">26/03/2019</div><div class="t r" style="left:628px;width:200px;top:641.69px;font-size:11px;color:#1e1e1e">14:00:00</div><div class="t" style="left:839.5px;top:641.69px;font-size:11px;color:#5c5c5c;letter-spacing:0.23px">Frühschicht</div><div class="t" style="left:959px;top:641.69px;font-size:11px;color:#1e1e1e;letter-spacing:0.23px">Frühschicht</div><div class="t r" style="left:988px;width:200px;top:641.69px;font-size:11px;color:#1e1e1e">10:00:00</div><div class="t r" style="left:1108px;width:200px;top:641.69px;font-size:11px;color:#1e1e1e">10:15:00</div><div class="t r" style="left:1228px;width:200px;top:641.69px;font-size:11px;color:#1e1e1e">12:00:00</div><div class="t r" style="left:1349px;width:200px;top:641.69px;font-size:11px;color:#1e1e1e">12:30:00</div><div class="t" style="left:359.5px;top:661.69px;font-size:11px;color:#1e1e1e;">26/03/2019</div><div class="t r" style="left:388px;width:200px;top:661.69px;font-size:11px;color:#1e1e1e">14:00:00</div><div class="t" style="left:599.5px;top:661.69px;font-size:11px;color:#1e1e1e;">26/03/2019</div><div class="t r" style="left:628px;width:200px;top:661.69px;font-size:11px;color:#1e1e1e">22:00:00</div><div class="t" style="left:839.5px;top:661.69px;font-size:11px;color:#5c5c5c;letter-spacing:0.23px">Spätschicht</div><div class="t" style="left:959px;top:661.69px;font-size:11px;color:#1e1e1e;letter-spacing:0.23px">Spätschicht</div><div class="t" style="left:359.5px;top:681.69px;font-size:11px;color:#1e1e1e;">26/03/2019</div><div class="t r" style="left:388px;width:200px;top:681.69px;font-size:11px;color:#1e1e1e">22:00:00</div><div class="t" style="left:599.5px;top:681.69px;font-size:11px;color:#1e1e1e;">27/03/2019</div><div class="t r" style="left:628px;width:200px;top:681.69px;font-size:11px;color:#1e1e1e">06:00:00</div><div class="t" style="left:959px;top:681.69px;font-size:11px;color:#1e1e1e;letter-spacing:0.23px">Nachtschicht</div><div class="t" style="left:359.5px;top:701.69px;font-size:11px;color:#1e1e1e;">27/03/2019</div><div class="t r" style="left:388px;width:200px;top:701.69px;font-size:11px;color:#1e1e1e">06:00:00</div><div class="t" style="left:599.5px;top:701.69px;font-size:11px;color:#1e1e1e;">27/03/2019</div><div class="t r" style="left:628px;width:200px;top:701.69px;font-size:11px;color:#1e1e1e">14:00:00</div><div class="t" style="left:839.5px;top:701.69px;font-size:11px;color:#5c5c5c;letter-spacing:0.23px">Frühschicht</div><div class="t" style="left:959px;top:701.69px;font-size:11px;color:#1e1e1e;letter-spacing:0.23px">Frühschicht</div><div class="t r" style="left:988px;width:200px;top:701.69px;font-size:11px;color:#1e1e1e">10:00:00</div><div class="t r" style="left:1108px;width:200px;top:701.69px;font-size:11px;color:#1e1e1e">10:15:00</div><div class="t r" style="left:1228px;width:200px;top:701.69px;font-size:11px;color:#1e1e1e">12:00:00</div><div class="t r" style="left:1349px;width:200px;top:701.69px;font-size:11px;color:#1e1e1e">12:30:00</div><div class="t" style="left:359.5px;top:721.69px;font-size:11px;color:#1e1e1e;">27/03/2019</div><div class="t r" style="left:388px;width:200px;top:721.69px;font-size:11px;color:#1e1e1e">14:00:00</div><div class="t" style="left:599.5px;top:721.69px;font-size:11px;color:#1e1e1e;">27/03/2019</div><div class="t r" style="left:628px;width:200px;top:721.69px;font-size:11px;color:#1e1e1e">22:00:00</div><div class="t" style="left:839.5px;top:721.69px;font-size:11px;color:#5c5c5c;letter-spacing:0.23px">Spätschicht</div><div class="t" style="left:959px;top:721.69px;font-size:11px;color:#1e1e1e;letter-spacing:0.23px">Spätschicht</div><div class="t" style="left:359.5px;top:741.69px;font-size:11px;color:#1e1e1e;">27/03/2019</div><div class="t r" style="left:388px;width:200px;top:741.69px;font-size:11px;color:#1e1e1e">22:00:00</div><div class="t" style="left:599.5px;top:741.69px;font-size:11px;color:#1e1e1e;">28/03/2019</div><div class="t r" style="left:628px;width:200px;top:741.69px;font-size:11px;color:#1e1e1e">06:00:00</div><div class="t" style="left:959px;top:741.69px;font-size:11px;color:#1e1e1e;letter-spacing:0.23px">Nachtschicht</div><div class="t" style="left:359.5px;top:761.69px;font-size:11px;color:#1e1e1e;">28/03/2019</div><div class="t r" style="left:388px;width:200px;top:761.69px;font-size:11px;color:#1e1e1e">06:00:00</div><div class="t" style="left:599.5px;top:761.69px;font-size:11px;color:#1e1e1e;">28/03/2019</div><div class="t r" style="left:628px;width:200px;top:761.69px;font-size:11px;color:#1e1e1e">14:00:00</div><div class="t" style="left:839.5px;top:761.69px;font-size:11px;color:#5c5c5c;letter-spacing:0.23px">Frühschicht</div><div class="t" style="left:959px;top:761.69px;font-size:11px;color:#1e1e1e;letter-spacing:0.23px">Frühschicht</div><div class="t r" style="left:988px;width:200px;top:761.69px;font-size:11px;color:#1e1e1e">10:00:00</div><div class="t r" style="left:1108px;width:200px;top:761.69px;font-size:11px;color:#1e1e1e">10:15:00</div><div class="t r" style="left:1228px;width:200px;top:761.69px;font-size:11px;color:#1e1e1e">12:00:00</div><div class="t r" style="left:1349px;width:200px;top:761.69px;font-size:11px;color:#1e1e1e">12:30:00</div><div class="t" style="left:359.5px;top:781.69px;font-size:11px;color:#1e1e1e;">28/03/2019</div><div class="t r" style="left:388px;width:200px;top:781.69px;font-size:11px;color:#1e1e1e">14:00:00</div><div class="t" style="left:599.5px;top:781.69px;font-size:11px;color:#1e1e1e;">28/03/2019</div><div class="t r" style="left:628px;width:200px;top:781.69px;font-size:11px;color:#1e1e1e">22:00:00</div><div class="t" style="left:839.5px;top:781.69px;font-size:11px;color:#5c5c5c;letter-spacing:0.23px">Spätschicht</div><div class="t" style="left:959px;top:781.69px;font-size:11px;color:#1e1e1e;letter-spacing:0.23px">Spätschicht</div><div class="t" style="left:359.5px;top:801.69px;font-size:11px;color:#1e1e1e;">28/03/2019</div><div class="t r" style="left:388px;width:200px;top:801.69px;font-size:11px;color:#1e1e1e">22:00:00</div><div class="t" style="left:599.5px;top:801.69px;font-size:11px;color:#1e1e1e;">29/03/2019</div><div class="t r" style="left:628px;width:200px;top:801.69px;font-size:11px;color:#1e1e1e">06:00:00</div><div class="t" style="left:959px;top:801.69px;font-size:11px;color:#1e1e1e;letter-spacing:0.23px">Nachtschicht</div><div class="t" style="left:359.5px;top:821.69px;font-size:11px;color:#1e1e1e;">29/03/2019</div><div class="t r" style="left:388px;width:200px;top:821.69px;font-size:11px;color:#1e1e1e">06:00:00</div><div class="t" style="left:599.5px;top:821.69px;font-size:11px;color:#1e1e1e;">29/03/2019</div><div class="t r" style="left:628px;width:200px;top:821.69px;font-size:11px;color:#1e1e1e">14:00:00</div><div class="t" style="left:839.5px;top:821.69px;font-size:11px;color:#5c5c5c;letter-spacing:0.23px">Frühschicht</div><div class="t" style="left:959px;top:821.69px;font-size:11px;color:#1e1e1e;letter-spacing:0.23px">Frühschicht</div><div class="t r" style="left:988px;width:200px;top:821.69px;font-size:11px;color:#1e1e1e">10:00:00</div><div class="t r" style="left:1108px;width:200px;top:821.69px;font-size:11px;color:#1e1e1e">10:15:00</div><div class="t r" style="left:1228px;width:200px;top:821.69px;font-size:11px;color:#1e1e1e">12:00:00</div><div class="t r" style="left:1349px;width:200px;top:821.69px;font-size:11px;color:#1e1e1e">12:30:00</div><div class="t" style="left:359.5px;top:841.69px;font-size:11px;color:#1e1e1e;">29/03/2019</div><div class="t r" style="left:388px;width:200px;top:841.69px;font-size:11px;color:#1e1e1e">14:00:00</div><div class="t" style="left:599.5px;top:841.69px;font-size:11px;color:#1e1e1e;">29/03/2019</div><div class="t r" style="left:628px;width:200px;top:841.69px;font-size:11px;color:#1e1e1e">22:00:00</div><div class="t" style="left:839.5px;top:841.69px;font-size:11px;color:#5c5c5c;letter-spacing:0.23px">Spätschicht</div><div class="t" style="left:959px;top:841.69px;font-size:11px;color:#1e1e1e;letter-spacing:0.23px">Spätschicht</div><div class="t" style="left:359.5px;top:861.69px;font-size:11px;color:#1e1e1e;">29/03/2019</div><div class="t r" style="left:388px;width:200px;top:861.69px;font-size:11px;color:#1e1e1e">22:00:00</div><div class="t" style="left:599.5px;top:861.69px;font-size:11px;color:#1e1e1e;">30/03/2019</div><div class="t r" style="left:628px;width:200px;top:861.69px;font-size:11px;color:#1e1e1e">06:00:00</div><div class="t" style="left:959px;top:861.69px;font-size:11px;color:#1e1e1e;letter-spacing:0.23px">Nachtschicht</div><div class="t" style="left:359.5px;top:881.69px;font-size:11px;color:#1e1e1e;">30/03/2019</div><div class="t r" style="left:388px;width:200px;top:881.69px;font-size:11px;color:#1e1e1e">00:00:00</div><div class="t" style="left:599.5px;top:881.69px;font-size:11px;color:#1e1e1e;">30/03/2019</div><div class="t r" style="left:628px;width:200px;top:881.69px;font-size:11px;color:#1e1e1e">23:59:00</div><div class="t" style="left:959px;top:881.69px;font-size:11px;color:#1e1e1e;letter-spacing:0.23px">Frei</div><div class="t" style="left:359.5px;top:901.69px;font-size:11px;color:#1e1e1e;">31/03/2019</div><div class="t r" style="left:388px;width:200px;top:901.69px;font-size:11px;color:#1e1e1e">00:00:00</div><div class="t" style="left:599.5px;top:901.69px;font-size:11px;color:#1e1e1e;">31/03/2019</div><div class="t r" style="left:628px;width:200px;top:901.69px;font-size:11px;color:#1e1e1e">23:59:00</div><div class="t" style="left:959px;top:901.69px;font-size:11px;color:#1e1e1e;letter-spacing:0.23px">Frei</div><div class="t" style="left:359.5px;top:921.69px;font-size:11px;color:#1e1e1e;">01/04/2019</div><div class="t r" style="left:388px;width:200px;top:921.69px;font-size:11px;color:#1e1e1e">06:00:00</div><div class="t" style="left:599.5px;top:921.69px;font-size:11px;color:#1e1e1e;">01/04/2019</div><div class="t r" style="left:628px;width:200px;top:921.69px;font-size:11px;color:#1e1e1e">14:00:00</div><div class="t" style="left:839.5px;top:921.69px;font-size:11px;color:#5c5c5c;letter-spacing:0.23px">Frühschicht</div><div class="t" style="left:959px;top:921.69px;font-size:11px;color:#1e1e1e;letter-spacing:0.23px">Frühschicht</div><div class="t r" style="left:988px;width:200px;top:921.69px;font-size:11px;color:#1e1e1e">10:00:00</div><div class="t r" style="left:1108px;width:200px;top:921.69px;font-size:11px;color:#1e1e1e">10:15:00</div><div class="t r" style="left:1228px;width:200px;top:921.69px;font-size:11px;color:#1e1e1e">12:00:00</div><div class="t r" style="left:1349px;width:200px;top:921.69px;font-size:11px;color:#1e1e1e">12:30:00</div><div class="t" style="left:359.5px;top:941.69px;font-size:11px;color:#1e1e1e;">01/04/2019</div><div class="t r" style="left:388px;width:200px;top:941.69px;font-size:11px;color:#1e1e1e">14:00:00</div><div class="t" style="left:599.5px;top:941.69px;font-size:11px;color:#1e1e1e;">01/04/2019</div><div class="t r" style="left:628px;width:200px;top:941.69px;font-size:11px;color:#1e1e1e">22:00:00</div><div class="t" style="left:839.5px;top:941.69px;font-size:11px;color:#5c5c5c;letter-spacing:0.23px">Spätschicht</div><div class="t" style="left:959px;top:941.69px;font-size:11px;color:#1e1e1e;letter-spacing:0.23px">Spätschicht</div><div class="t" style="left:359.5px;top:961.69px;font-size:11px;color:#1e1e1e;">01/04/2019</div><div class="t r" style="left:388px;width:200px;top:961.69px;font-size:11px;color:#1e1e1e">22:00:00</div><div class="t" style="left:599.5px;top:961.69px;font-size:11px;color:#1e1e1e;">02/04/2019</div><div class="t r" style="left:628px;width:200px;top:961.69px;font-size:11px;color:#1e1e1e">06:00:00</div><div class="t" style="left:959px;top:961.69px;font-size:11px;color:#1e1e1e;letter-spacing:0.23px">Nachtschicht</div><div class="t" style="left:359.5px;top:981.69px;font-size:11px;color:#1e1e1e;">02/04/2019</div><div class="t r" style="left:388px;width:200px;top:981.69px;font-size:11px;color:#1e1e1e">06:00:00</div><div class="t" style="left:599.5px;top:981.69px;font-size:11px;color:#1e1e1e;">02/04/2019</div><div class="t r" style="left:628px;width:200px;top:981.69px;font-size:11px;color:#1e1e1e">14:00:00</div><div class="t" style="left:839.5px;top:981.69px;font-size:11px;color:#5c5c5c;letter-spacing:0.23px">Frühschicht</div><div class="t" style="left:959px;top:981.69px;font-size:11px;color:#1e1e1e;letter-spacing:0.23px">Frühschicht</div><div class="t r" style="left:988px;width:200px;top:981.69px;font-size:11px;color:#1e1e1e">10:00:00</div><div class="t r" style="left:1108px;width:200px;top:981.69px;font-size:11px;color:#1e1e1e">10:15:00</div><div class="t r" style="left:1228px;width:200px;top:981.69px;font-size:11px;color:#1e1e1e">12:00:00</div><div class="t r" style="left:1349px;width:200px;top:981.69px;font-size:11px;color:#1e1e1e">12:30:00</div><div class="abs" style="left:1902px;top:238px;width:17px;height:765px;background:#e8ecf0;"></div><div class="abs" style="left:1902px;top:255px;width:17px;height:11px;background:#b9c9d9;"></div><svg class="abs" style="left:0;top:0" width="1920" height="1034" viewBox="0 0 1920 1034"><path d="M943.3 246.2h6.4l-3.2 3.8zM943.3 266.2h6.4l-3.2 3.8zM943.3 286.2h6.4l-3.2 3.8zM943.3 306.2h6.4l-3.2 3.8zM943.3 326.2h6.4l-3.2 3.8zM943.3 346.2h6.4l-3.2 3.8zM943.3 366.2h6.4l-3.2 3.8zM943.3 386.2h6.4l-3.2 3.8zM943.3 406.2h6.4l-3.2 3.8zM943.3 426.2h6.4l-3.2 3.8zM943.3 446.2h6.4l-3.2 3.8zM943.3 466.2h6.4l-3.2 3.8zM943.3 486.2h6.4l-3.2 3.8zM943.3 506.2h6.4l-3.2 3.8zM943.3 526.2h6.4l-3.2 3.8zM943.3 546.2h6.4l-3.2 3.8zM943.3 566.2h6.4l-3.2 3.8zM943.3 586.2h6.4l-3.2 3.8zM943.3 606.2h6.4l-3.2 3.8zM943.3 626.2h6.4l-3.2 3.8zM943.3 646.2h6.4l-3.2 3.8zM943.3 666.2h6.4l-3.2 3.8zM943.3 686.2h6.4l-3.2 3.8zM943.3 706.2h6.4l-3.2 3.8zM943.3 726.2h6.4l-3.2 3.8zM943.3 746.2h6.4l-3.2 3.8zM943.3 766.2h6.4l-3.2 3.8zM943.3 786.2h6.4l-3.2 3.8zM943.3 806.2h6.4l-3.2 3.8zM943.3 826.2h6.4l-3.2 3.8zM943.3 846.2h6.4l-3.2 3.8zM943.3 866.2h6.4l-3.2 3.8zM943.3 886.2h6.4l-3.2 3.8zM943.3 906.2h6.4l-3.2 3.8zM943.3 926.2h6.4l-3.2 3.8zM943.3 946.2h6.4l-3.2 3.8zM943.3 966.2h6.4l-3.2 3.8zM943.3 986.2h6.4l-3.2 3.8z" fill="#a4c0d5"/><path d="M344 244.2l4.2 4-4.2 4z" fill="#333"/><path d="M1906 248h8l-4-4.2z" fill="#a9bccc"/><path d="M1905.8 991.7h8.2l-4.1 4.2z" fill="#a9bccc"/></svg></body></html>
